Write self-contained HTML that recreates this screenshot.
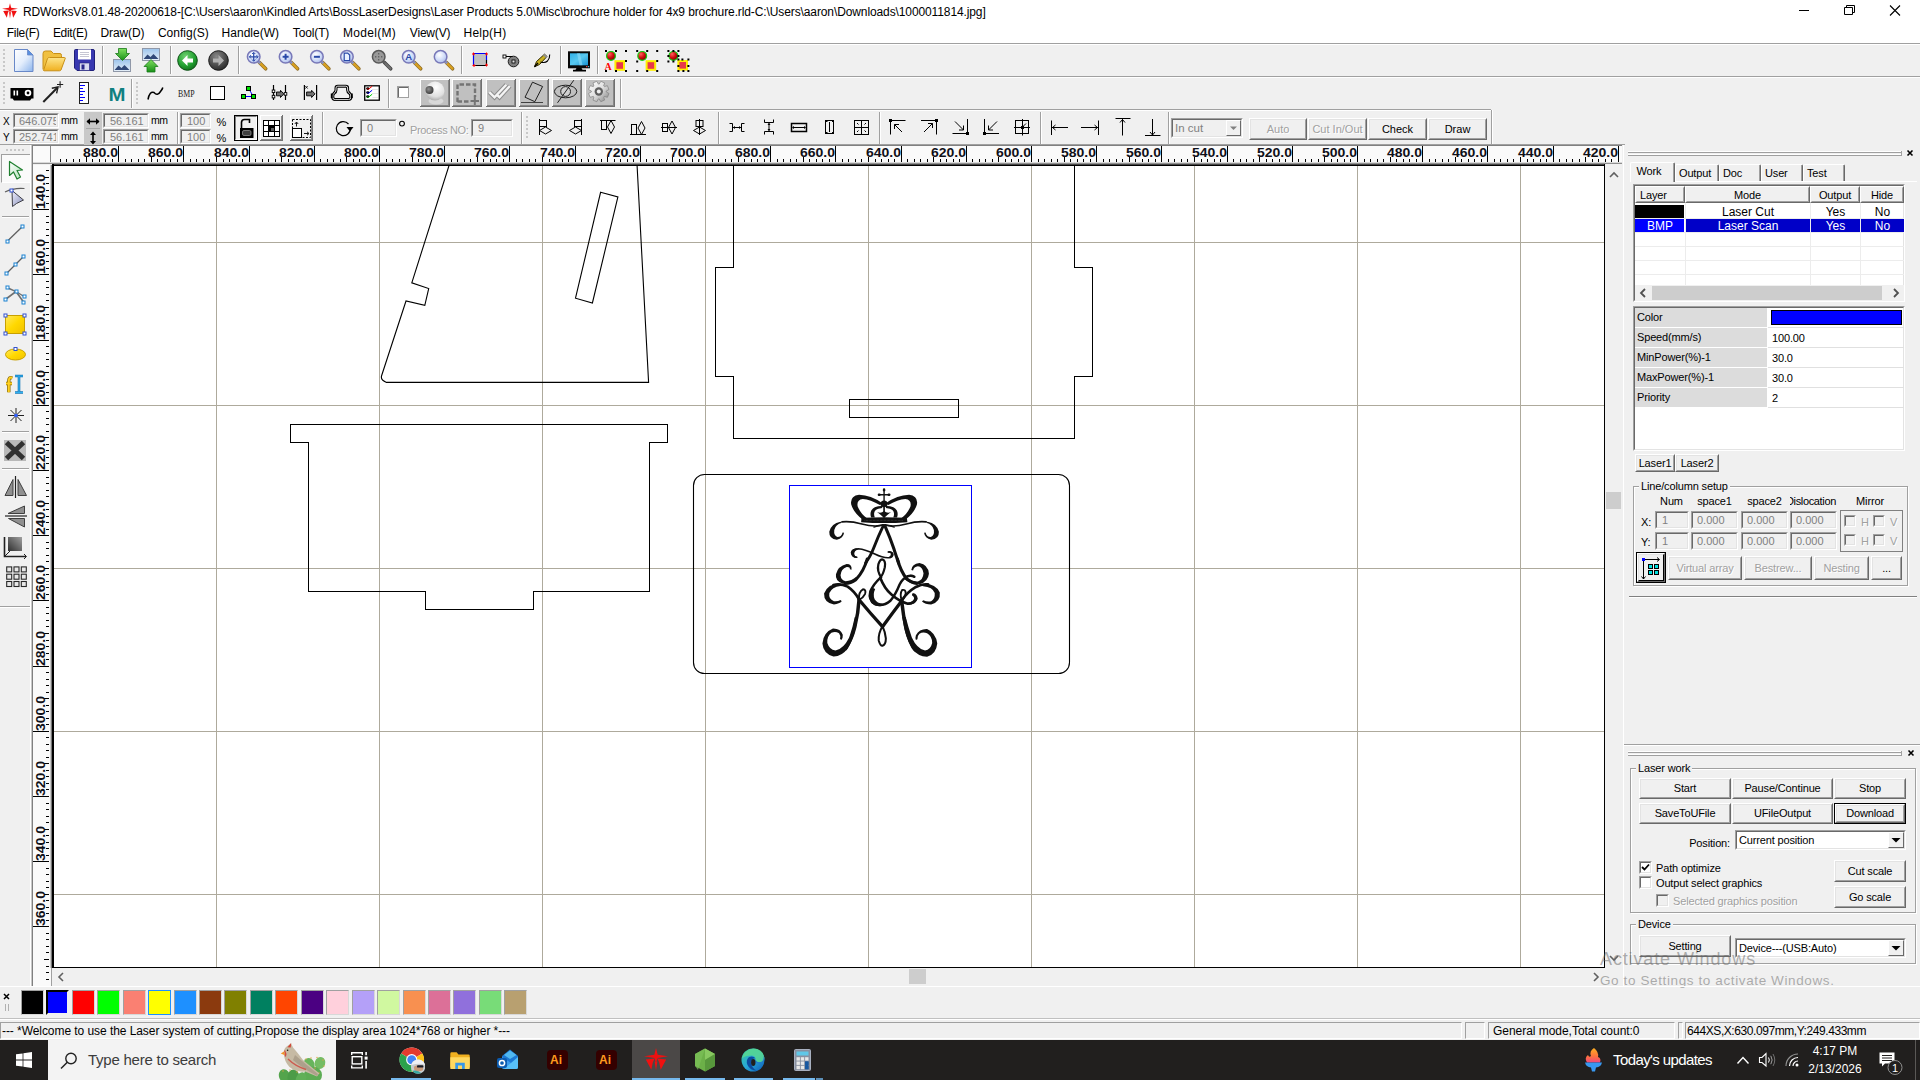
<!DOCTYPE html>
<html><head><meta charset="utf-8"><title>RDWorks</title><style>
html,body{margin:0;padding:0;}
body{width:1920px;height:1080px;overflow:hidden;background:#f0f0f0;font-family:"Liberation Sans",sans-serif;font-size:11px;color:#000;position:relative;}
div{box-sizing:border-box;}
</style></head><body>
<div style="position:absolute;left:51px;top:145px;width:1571px;height:18px;background:#fafafa;"></div><svg style="position:absolute;left:51px;top:145px;" width="1571" height="18" viewBox="0 0 1571 18"><rect x="9.0" y="14" width="1" height="3" fill="#000"/><rect x="15.0" y="14" width="1" height="3" fill="#000"/><rect x="22.0" y="14" width="1" height="3" fill="#000"/><rect x="28.0" y="14" width="1" height="3" fill="#000"/><rect x="35.0" y="12" width="1" height="5" fill="#000"/><rect x="41.0" y="14" width="1" height="3" fill="#000"/><rect x="48.0" y="14" width="1" height="3" fill="#000"/><rect x="54.0" y="14" width="1" height="3" fill="#000"/><rect x="61.0" y="14" width="1" height="3" fill="#000"/><rect x="67.0" y="1" width="1" height="16" fill="#000"/><rect x="74.0" y="14" width="1" height="3" fill="#000"/><rect x="80.0" y="14" width="1" height="3" fill="#000"/><rect x="87.0" y="14" width="1" height="3" fill="#000"/><rect x="93.0" y="14" width="1" height="3" fill="#000"/><rect x="100.0" y="12" width="1" height="5" fill="#000"/><rect x="106.0" y="14" width="1" height="3" fill="#000"/><rect x="113.0" y="14" width="1" height="3" fill="#000"/><rect x="119.0" y="14" width="1" height="3" fill="#000"/><rect x="126.0" y="14" width="1" height="3" fill="#000"/><rect x="132.0" y="1" width="1" height="16" fill="#000"/><rect x="139.0" y="14" width="1" height="3" fill="#000"/><rect x="145.0" y="14" width="1" height="3" fill="#000"/><rect x="152.0" y="14" width="1" height="3" fill="#000"/><rect x="158.0" y="14" width="1" height="3" fill="#000"/><rect x="165.0" y="12" width="1" height="5" fill="#000"/><rect x="172.0" y="14" width="1" height="3" fill="#000"/><rect x="178.0" y="14" width="1" height="3" fill="#000"/><rect x="185.0" y="14" width="1" height="3" fill="#000"/><rect x="191.0" y="14" width="1" height="3" fill="#000"/><rect x="198.0" y="1" width="1" height="16" fill="#000"/><rect x="204.0" y="14" width="1" height="3" fill="#000"/><rect x="211.0" y="14" width="1" height="3" fill="#000"/><rect x="217.0" y="14" width="1" height="3" fill="#000"/><rect x="224.0" y="14" width="1" height="3" fill="#000"/><rect x="230.0" y="12" width="1" height="5" fill="#000"/><rect x="237.0" y="14" width="1" height="3" fill="#000"/><rect x="243.0" y="14" width="1" height="3" fill="#000"/><rect x="250.0" y="14" width="1" height="3" fill="#000"/><rect x="256.0" y="14" width="1" height="3" fill="#000"/><rect x="263.0" y="1" width="1" height="16" fill="#000"/><rect x="269.0" y="14" width="1" height="3" fill="#000"/><rect x="276.0" y="14" width="1" height="3" fill="#000"/><rect x="282.0" y="14" width="1" height="3" fill="#000"/><rect x="289.0" y="14" width="1" height="3" fill="#000"/><rect x="295.0" y="12" width="1" height="5" fill="#000"/><rect x="302.0" y="14" width="1" height="3" fill="#000"/><rect x="308.0" y="14" width="1" height="3" fill="#000"/><rect x="315.0" y="14" width="1" height="3" fill="#000"/><rect x="321.0" y="14" width="1" height="3" fill="#000"/><rect x="328.0" y="1" width="1" height="16" fill="#000"/><rect x="335.0" y="14" width="1" height="3" fill="#000"/><rect x="341.0" y="14" width="1" height="3" fill="#000"/><rect x="348.0" y="14" width="1" height="3" fill="#000"/><rect x="354.0" y="14" width="1" height="3" fill="#000"/><rect x="361.0" y="12" width="1" height="5" fill="#000"/><rect x="367.0" y="14" width="1" height="3" fill="#000"/><rect x="374.0" y="14" width="1" height="3" fill="#000"/><rect x="380.0" y="14" width="1" height="3" fill="#000"/><rect x="387.0" y="14" width="1" height="3" fill="#000"/><rect x="393.0" y="1" width="1" height="16" fill="#000"/><rect x="400.0" y="14" width="1" height="3" fill="#000"/><rect x="406.0" y="14" width="1" height="3" fill="#000"/><rect x="413.0" y="14" width="1" height="3" fill="#000"/><rect x="419.0" y="14" width="1" height="3" fill="#000"/><rect x="426.0" y="12" width="1" height="5" fill="#000"/><rect x="432.0" y="14" width="1" height="3" fill="#000"/><rect x="439.0" y="14" width="1" height="3" fill="#000"/><rect x="445.0" y="14" width="1" height="3" fill="#000"/><rect x="452.0" y="14" width="1" height="3" fill="#000"/><rect x="458.0" y="1" width="1" height="16" fill="#000"/><rect x="465.0" y="14" width="1" height="3" fill="#000"/><rect x="471.0" y="14" width="1" height="3" fill="#000"/><rect x="478.0" y="14" width="1" height="3" fill="#000"/><rect x="484.0" y="14" width="1" height="3" fill="#000"/><rect x="491.0" y="12" width="1" height="5" fill="#000"/><rect x="498.0" y="14" width="1" height="3" fill="#000"/><rect x="504.0" y="14" width="1" height="3" fill="#000"/><rect x="511.0" y="14" width="1" height="3" fill="#000"/><rect x="517.0" y="14" width="1" height="3" fill="#000"/><rect x="524.0" y="1" width="1" height="16" fill="#000"/><rect x="530.0" y="14" width="1" height="3" fill="#000"/><rect x="537.0" y="14" width="1" height="3" fill="#000"/><rect x="543.0" y="14" width="1" height="3" fill="#000"/><rect x="550.0" y="14" width="1" height="3" fill="#000"/><rect x="556.0" y="12" width="1" height="5" fill="#000"/><rect x="563.0" y="14" width="1" height="3" fill="#000"/><rect x="569.0" y="14" width="1" height="3" fill="#000"/><rect x="576.0" y="14" width="1" height="3" fill="#000"/><rect x="582.0" y="14" width="1" height="3" fill="#000"/><rect x="589.0" y="1" width="1" height="16" fill="#000"/><rect x="595.0" y="14" width="1" height="3" fill="#000"/><rect x="602.0" y="14" width="1" height="3" fill="#000"/><rect x="608.0" y="14" width="1" height="3" fill="#000"/><rect x="615.0" y="14" width="1" height="3" fill="#000"/><rect x="621.0" y="12" width="1" height="5" fill="#000"/><rect x="628.0" y="14" width="1" height="3" fill="#000"/><rect x="634.0" y="14" width="1" height="3" fill="#000"/><rect x="641.0" y="14" width="1" height="3" fill="#000"/><rect x="647.0" y="14" width="1" height="3" fill="#000"/><rect x="654.0" y="1" width="1" height="16" fill="#000"/><rect x="661.0" y="14" width="1" height="3" fill="#000"/><rect x="667.0" y="14" width="1" height="3" fill="#000"/><rect x="674.0" y="14" width="1" height="3" fill="#000"/><rect x="680.0" y="14" width="1" height="3" fill="#000"/><rect x="687.0" y="12" width="1" height="5" fill="#000"/><rect x="693.0" y="14" width="1" height="3" fill="#000"/><rect x="700.0" y="14" width="1" height="3" fill="#000"/><rect x="706.0" y="14" width="1" height="3" fill="#000"/><rect x="713.0" y="14" width="1" height="3" fill="#000"/><rect x="719.0" y="1" width="1" height="16" fill="#000"/><rect x="726.0" y="14" width="1" height="3" fill="#000"/><rect x="732.0" y="14" width="1" height="3" fill="#000"/><rect x="739.0" y="14" width="1" height="3" fill="#000"/><rect x="745.0" y="14" width="1" height="3" fill="#000"/><rect x="752.0" y="12" width="1" height="5" fill="#000"/><rect x="758.0" y="14" width="1" height="3" fill="#000"/><rect x="765.0" y="14" width="1" height="3" fill="#000"/><rect x="771.0" y="14" width="1" height="3" fill="#000"/><rect x="778.0" y="14" width="1" height="3" fill="#000"/><rect x="784.0" y="1" width="1" height="16" fill="#000"/><rect x="791.0" y="14" width="1" height="3" fill="#000"/><rect x="797.0" y="14" width="1" height="3" fill="#000"/><rect x="804.0" y="14" width="1" height="3" fill="#000"/><rect x="810.0" y="14" width="1" height="3" fill="#000"/><rect x="817.0" y="12" width="1" height="5" fill="#000"/><rect x="824.0" y="14" width="1" height="3" fill="#000"/><rect x="830.0" y="14" width="1" height="3" fill="#000"/><rect x="837.0" y="14" width="1" height="3" fill="#000"/><rect x="843.0" y="14" width="1" height="3" fill="#000"/><rect x="850.0" y="1" width="1" height="16" fill="#000"/><rect x="856.0" y="14" width="1" height="3" fill="#000"/><rect x="863.0" y="14" width="1" height="3" fill="#000"/><rect x="869.0" y="14" width="1" height="3" fill="#000"/><rect x="876.0" y="14" width="1" height="3" fill="#000"/><rect x="882.0" y="12" width="1" height="5" fill="#000"/><rect x="889.0" y="14" width="1" height="3" fill="#000"/><rect x="895.0" y="14" width="1" height="3" fill="#000"/><rect x="902.0" y="14" width="1" height="3" fill="#000"/><rect x="908.0" y="14" width="1" height="3" fill="#000"/><rect x="915.0" y="1" width="1" height="16" fill="#000"/><rect x="921.0" y="14" width="1" height="3" fill="#000"/><rect x="928.0" y="14" width="1" height="3" fill="#000"/><rect x="934.0" y="14" width="1" height="3" fill="#000"/><rect x="941.0" y="14" width="1" height="3" fill="#000"/><rect x="947.0" y="12" width="1" height="5" fill="#000"/><rect x="954.0" y="14" width="1" height="3" fill="#000"/><rect x="960.0" y="14" width="1" height="3" fill="#000"/><rect x="967.0" y="14" width="1" height="3" fill="#000"/><rect x="973.0" y="14" width="1" height="3" fill="#000"/><rect x="980.0" y="1" width="1" height="16" fill="#000"/><rect x="987.0" y="14" width="1" height="3" fill="#000"/><rect x="993.0" y="14" width="1" height="3" fill="#000"/><rect x="1000.0" y="14" width="1" height="3" fill="#000"/><rect x="1006.0" y="14" width="1" height="3" fill="#000"/><rect x="1013.0" y="12" width="1" height="5" fill="#000"/><rect x="1019.0" y="14" width="1" height="3" fill="#000"/><rect x="1026.0" y="14" width="1" height="3" fill="#000"/><rect x="1032.0" y="14" width="1" height="3" fill="#000"/><rect x="1039.0" y="14" width="1" height="3" fill="#000"/><rect x="1045.0" y="1" width="1" height="16" fill="#000"/><rect x="1052.0" y="14" width="1" height="3" fill="#000"/><rect x="1058.0" y="14" width="1" height="3" fill="#000"/><rect x="1065.0" y="14" width="1" height="3" fill="#000"/><rect x="1071.0" y="14" width="1" height="3" fill="#000"/><rect x="1078.0" y="12" width="1" height="5" fill="#000"/><rect x="1084.0" y="14" width="1" height="3" fill="#000"/><rect x="1091.0" y="14" width="1" height="3" fill="#000"/><rect x="1097.0" y="14" width="1" height="3" fill="#000"/><rect x="1104.0" y="14" width="1" height="3" fill="#000"/><rect x="1110.0" y="1" width="1" height="16" fill="#000"/><rect x="1117.0" y="14" width="1" height="3" fill="#000"/><rect x="1123.0" y="14" width="1" height="3" fill="#000"/><rect x="1130.0" y="14" width="1" height="3" fill="#000"/><rect x="1136.0" y="14" width="1" height="3" fill="#000"/><rect x="1143.0" y="12" width="1" height="5" fill="#000"/><rect x="1150.0" y="14" width="1" height="3" fill="#000"/><rect x="1156.0" y="14" width="1" height="3" fill="#000"/><rect x="1163.0" y="14" width="1" height="3" fill="#000"/><rect x="1169.0" y="14" width="1" height="3" fill="#000"/><rect x="1176.0" y="1" width="1" height="16" fill="#000"/><rect x="1182.0" y="14" width="1" height="3" fill="#000"/><rect x="1189.0" y="14" width="1" height="3" fill="#000"/><rect x="1195.0" y="14" width="1" height="3" fill="#000"/><rect x="1202.0" y="14" width="1" height="3" fill="#000"/><rect x="1208.0" y="12" width="1" height="5" fill="#000"/><rect x="1215.0" y="14" width="1" height="3" fill="#000"/><rect x="1221.0" y="14" width="1" height="3" fill="#000"/><rect x="1228.0" y="14" width="1" height="3" fill="#000"/><rect x="1234.0" y="14" width="1" height="3" fill="#000"/><rect x="1241.0" y="1" width="1" height="16" fill="#000"/><rect x="1247.0" y="14" width="1" height="3" fill="#000"/><rect x="1254.0" y="14" width="1" height="3" fill="#000"/><rect x="1260.0" y="14" width="1" height="3" fill="#000"/><rect x="1267.0" y="14" width="1" height="3" fill="#000"/><rect x="1273.0" y="12" width="1" height="5" fill="#000"/><rect x="1280.0" y="14" width="1" height="3" fill="#000"/><rect x="1286.0" y="14" width="1" height="3" fill="#000"/><rect x="1293.0" y="14" width="1" height="3" fill="#000"/><rect x="1299.0" y="14" width="1" height="3" fill="#000"/><rect x="1306.0" y="1" width="1" height="16" fill="#000"/><rect x="1313.0" y="14" width="1" height="3" fill="#000"/><rect x="1319.0" y="14" width="1" height="3" fill="#000"/><rect x="1326.0" y="14" width="1" height="3" fill="#000"/><rect x="1332.0" y="14" width="1" height="3" fill="#000"/><rect x="1339.0" y="12" width="1" height="5" fill="#000"/><rect x="1345.0" y="14" width="1" height="3" fill="#000"/><rect x="1352.0" y="14" width="1" height="3" fill="#000"/><rect x="1358.0" y="14" width="1" height="3" fill="#000"/><rect x="1365.0" y="14" width="1" height="3" fill="#000"/><rect x="1371.0" y="1" width="1" height="16" fill="#000"/><rect x="1378.0" y="14" width="1" height="3" fill="#000"/><rect x="1384.0" y="14" width="1" height="3" fill="#000"/><rect x="1391.0" y="14" width="1" height="3" fill="#000"/><rect x="1397.0" y="14" width="1" height="3" fill="#000"/><rect x="1404.0" y="12" width="1" height="5" fill="#000"/><rect x="1410.0" y="14" width="1" height="3" fill="#000"/><rect x="1417.0" y="14" width="1" height="3" fill="#000"/><rect x="1423.0" y="14" width="1" height="3" fill="#000"/><rect x="1430.0" y="14" width="1" height="3" fill="#000"/><rect x="1436.0" y="1" width="1" height="16" fill="#000"/><rect x="1443.0" y="14" width="1" height="3" fill="#000"/><rect x="1449.0" y="14" width="1" height="3" fill="#000"/><rect x="1456.0" y="14" width="1" height="3" fill="#000"/><rect x="1462.0" y="14" width="1" height="3" fill="#000"/><rect x="1469.0" y="12" width="1" height="5" fill="#000"/><rect x="1476.0" y="14" width="1" height="3" fill="#000"/><rect x="1482.0" y="14" width="1" height="3" fill="#000"/><rect x="1489.0" y="14" width="1" height="3" fill="#000"/><rect x="1495.0" y="14" width="1" height="3" fill="#000"/><rect x="1502.0" y="1" width="1" height="16" fill="#000"/><rect x="1508.0" y="14" width="1" height="3" fill="#000"/><rect x="1515.0" y="14" width="1" height="3" fill="#000"/><rect x="1521.0" y="14" width="1" height="3" fill="#000"/><rect x="1528.0" y="14" width="1" height="3" fill="#000"/><rect x="1534.0" y="12" width="1" height="5" fill="#000"/><rect x="1541.0" y="14" width="1" height="3" fill="#000"/><rect x="1547.0" y="14" width="1" height="3" fill="#000"/><rect x="1554.0" y="14" width="1" height="3" fill="#000"/><rect x="1560.0" y="14" width="1" height="3" fill="#000"/><rect x="1567.0" y="1" width="1" height="16" fill="#000"/><text x="67.0" y="11.6" text-anchor="end" font-family="Liberation Sans" font-weight="bold" font-size="13" textLength="35" lengthAdjust="spacingAndGlyphs" fill="#101018">880.0</text><text x="132.0" y="11.6" text-anchor="end" font-family="Liberation Sans" font-weight="bold" font-size="13" textLength="35" lengthAdjust="spacingAndGlyphs" fill="#101018">860.0</text><text x="198.0" y="11.6" text-anchor="end" font-family="Liberation Sans" font-weight="bold" font-size="13" textLength="35" lengthAdjust="spacingAndGlyphs" fill="#101018">840.0</text><text x="263.0" y="11.6" text-anchor="end" font-family="Liberation Sans" font-weight="bold" font-size="13" textLength="35" lengthAdjust="spacingAndGlyphs" fill="#101018">820.0</text><text x="328.0" y="11.6" text-anchor="end" font-family="Liberation Sans" font-weight="bold" font-size="13" textLength="35" lengthAdjust="spacingAndGlyphs" fill="#101018">800.0</text><text x="393.0" y="11.6" text-anchor="end" font-family="Liberation Sans" font-weight="bold" font-size="13" textLength="35" lengthAdjust="spacingAndGlyphs" fill="#101018">780.0</text><text x="458.0" y="11.6" text-anchor="end" font-family="Liberation Sans" font-weight="bold" font-size="13" textLength="35" lengthAdjust="spacingAndGlyphs" fill="#101018">760.0</text><text x="524.0" y="11.6" text-anchor="end" font-family="Liberation Sans" font-weight="bold" font-size="13" textLength="35" lengthAdjust="spacingAndGlyphs" fill="#101018">740.0</text><text x="589.0" y="11.6" text-anchor="end" font-family="Liberation Sans" font-weight="bold" font-size="13" textLength="35" lengthAdjust="spacingAndGlyphs" fill="#101018">720.0</text><text x="654.0" y="11.6" text-anchor="end" font-family="Liberation Sans" font-weight="bold" font-size="13" textLength="35" lengthAdjust="spacingAndGlyphs" fill="#101018">700.0</text><text x="719.0" y="11.6" text-anchor="end" font-family="Liberation Sans" font-weight="bold" font-size="13" textLength="35" lengthAdjust="spacingAndGlyphs" fill="#101018">680.0</text><text x="784.0" y="11.6" text-anchor="end" font-family="Liberation Sans" font-weight="bold" font-size="13" textLength="35" lengthAdjust="spacingAndGlyphs" fill="#101018">660.0</text><text x="850.0" y="11.6" text-anchor="end" font-family="Liberation Sans" font-weight="bold" font-size="13" textLength="35" lengthAdjust="spacingAndGlyphs" fill="#101018">640.0</text><text x="915.0" y="11.6" text-anchor="end" font-family="Liberation Sans" font-weight="bold" font-size="13" textLength="35" lengthAdjust="spacingAndGlyphs" fill="#101018">620.0</text><text x="980.0" y="11.6" text-anchor="end" font-family="Liberation Sans" font-weight="bold" font-size="13" textLength="35" lengthAdjust="spacingAndGlyphs" fill="#101018">600.0</text><text x="1045.0" y="11.6" text-anchor="end" font-family="Liberation Sans" font-weight="bold" font-size="13" textLength="35" lengthAdjust="spacingAndGlyphs" fill="#101018">580.0</text><text x="1110.0" y="11.6" text-anchor="end" font-family="Liberation Sans" font-weight="bold" font-size="13" textLength="35" lengthAdjust="spacingAndGlyphs" fill="#101018">560.0</text><text x="1176.0" y="11.6" text-anchor="end" font-family="Liberation Sans" font-weight="bold" font-size="13" textLength="35" lengthAdjust="spacingAndGlyphs" fill="#101018">540.0</text><text x="1241.0" y="11.6" text-anchor="end" font-family="Liberation Sans" font-weight="bold" font-size="13" textLength="35" lengthAdjust="spacingAndGlyphs" fill="#101018">520.0</text><text x="1306.0" y="11.6" text-anchor="end" font-family="Liberation Sans" font-weight="bold" font-size="13" textLength="35" lengthAdjust="spacingAndGlyphs" fill="#101018">500.0</text><text x="1371.0" y="11.6" text-anchor="end" font-family="Liberation Sans" font-weight="bold" font-size="13" textLength="35" lengthAdjust="spacingAndGlyphs" fill="#101018">480.0</text><text x="1436.0" y="11.6" text-anchor="end" font-family="Liberation Sans" font-weight="bold" font-size="13" textLength="35" lengthAdjust="spacingAndGlyphs" fill="#101018">460.0</text><text x="1502.0" y="11.6" text-anchor="end" font-family="Liberation Sans" font-weight="bold" font-size="13" textLength="35" lengthAdjust="spacingAndGlyphs" fill="#101018">440.0</text><text x="1567.0" y="11.6" text-anchor="end" font-family="Liberation Sans" font-weight="bold" font-size="13" textLength="35" lengthAdjust="spacingAndGlyphs" fill="#101018">420.0</text></svg><div style="position:absolute;left:33px;top:145px;width:18px;height:18px;background:#fafafa;box-sizing:border-box;border-right:1px solid #888;border-bottom:1px solid #888;"></div><div style="position:absolute;left:33px;top:163px;width:1589px;height:1px;background:#909090;"></div><div style="position:absolute;left:33px;top:162px;width:1589px;height:1px;background:#d8d8d8;"></div><div style="position:absolute;left:33px;top:145px;width:1589px;height:1px;background:#808080;"></div><div style="position:absolute;left:51px;top:968px;width:1px;height:18px;background:#a0a0a0;"></div><div style="position:absolute;left:33px;top:165px;width:18px;height:822px;background:#fafafa;"></div><svg style="position:absolute;left:33px;top:165px;" width="18" height="822" viewBox="0 0 18 822"><rect x="13" y="5.0" width="3" height="1" fill="#000"/><rect x="11" y="12.0" width="5" height="1" fill="#000"/><rect x="13" y="18.0" width="3" height="1" fill="#000"/><rect x="13" y="25.0" width="3" height="1" fill="#000"/><rect x="13" y="31.0" width="3" height="1" fill="#000"/><rect x="13" y="38.0" width="3" height="1" fill="#000"/><rect x="0" y="44.0" width="16" height="1" fill="#000"/><rect x="13" y="51.0" width="3" height="1" fill="#000"/><rect x="13" y="57.0" width="3" height="1" fill="#000"/><rect x="13" y="64.0" width="3" height="1" fill="#000"/><rect x="13" y="70.0" width="3" height="1" fill="#000"/><rect x="11" y="77.0" width="5" height="1" fill="#000"/><rect x="13" y="83.0" width="3" height="1" fill="#000"/><rect x="13" y="90.0" width="3" height="1" fill="#000"/><rect x="13" y="96.0" width="3" height="1" fill="#000"/><rect x="13" y="103.0" width="3" height="1" fill="#000"/><rect x="0" y="109.0" width="16" height="1" fill="#000"/><rect x="13" y="116.0" width="3" height="1" fill="#000"/><rect x="13" y="122.0" width="3" height="1" fill="#000"/><rect x="13" y="129.0" width="3" height="1" fill="#000"/><rect x="13" y="135.0" width="3" height="1" fill="#000"/><rect x="11" y="142.0" width="5" height="1" fill="#000"/><rect x="13" y="149.0" width="3" height="1" fill="#000"/><rect x="13" y="155.0" width="3" height="1" fill="#000"/><rect x="13" y="162.0" width="3" height="1" fill="#000"/><rect x="13" y="168.0" width="3" height="1" fill="#000"/><rect x="0" y="175.0" width="16" height="1" fill="#000"/><rect x="13" y="181.0" width="3" height="1" fill="#000"/><rect x="13" y="188.0" width="3" height="1" fill="#000"/><rect x="13" y="194.0" width="3" height="1" fill="#000"/><rect x="13" y="201.0" width="3" height="1" fill="#000"/><rect x="11" y="207.0" width="5" height="1" fill="#000"/><rect x="13" y="214.0" width="3" height="1" fill="#000"/><rect x="13" y="220.0" width="3" height="1" fill="#000"/><rect x="13" y="227.0" width="3" height="1" fill="#000"/><rect x="13" y="233.0" width="3" height="1" fill="#000"/><rect x="0" y="240.0" width="16" height="1" fill="#000"/><rect x="13" y="246.0" width="3" height="1" fill="#000"/><rect x="13" y="253.0" width="3" height="1" fill="#000"/><rect x="13" y="259.0" width="3" height="1" fill="#000"/><rect x="13" y="266.0" width="3" height="1" fill="#000"/><rect x="11" y="272.0" width="5" height="1" fill="#000"/><rect x="13" y="279.0" width="3" height="1" fill="#000"/><rect x="13" y="285.0" width="3" height="1" fill="#000"/><rect x="13" y="292.0" width="3" height="1" fill="#000"/><rect x="13" y="298.0" width="3" height="1" fill="#000"/><rect x="0" y="305.0" width="16" height="1" fill="#000"/><rect x="13" y="312.0" width="3" height="1" fill="#000"/><rect x="13" y="318.0" width="3" height="1" fill="#000"/><rect x="13" y="325.0" width="3" height="1" fill="#000"/><rect x="13" y="331.0" width="3" height="1" fill="#000"/><rect x="11" y="338.0" width="5" height="1" fill="#000"/><rect x="13" y="344.0" width="3" height="1" fill="#000"/><rect x="13" y="351.0" width="3" height="1" fill="#000"/><rect x="13" y="357.0" width="3" height="1" fill="#000"/><rect x="13" y="364.0" width="3" height="1" fill="#000"/><rect x="0" y="370.0" width="16" height="1" fill="#000"/><rect x="13" y="377.0" width="3" height="1" fill="#000"/><rect x="13" y="383.0" width="3" height="1" fill="#000"/><rect x="13" y="390.0" width="3" height="1" fill="#000"/><rect x="13" y="396.0" width="3" height="1" fill="#000"/><rect x="11" y="403.0" width="5" height="1" fill="#000"/><rect x="13" y="409.0" width="3" height="1" fill="#000"/><rect x="13" y="416.0" width="3" height="1" fill="#000"/><rect x="13" y="422.0" width="3" height="1" fill="#000"/><rect x="13" y="429.0" width="3" height="1" fill="#000"/><rect x="0" y="435.0" width="16" height="1" fill="#000"/><rect x="13" y="442.0" width="3" height="1" fill="#000"/><rect x="13" y="448.0" width="3" height="1" fill="#000"/><rect x="13" y="455.0" width="3" height="1" fill="#000"/><rect x="13" y="461.0" width="3" height="1" fill="#000"/><rect x="11" y="468.0" width="5" height="1" fill="#000"/><rect x="13" y="475.0" width="3" height="1" fill="#000"/><rect x="13" y="481.0" width="3" height="1" fill="#000"/><rect x="13" y="488.0" width="3" height="1" fill="#000"/><rect x="13" y="494.0" width="3" height="1" fill="#000"/><rect x="0" y="501.0" width="16" height="1" fill="#000"/><rect x="13" y="507.0" width="3" height="1" fill="#000"/><rect x="13" y="514.0" width="3" height="1" fill="#000"/><rect x="13" y="520.0" width="3" height="1" fill="#000"/><rect x="13" y="527.0" width="3" height="1" fill="#000"/><rect x="11" y="533.0" width="5" height="1" fill="#000"/><rect x="13" y="540.0" width="3" height="1" fill="#000"/><rect x="13" y="546.0" width="3" height="1" fill="#000"/><rect x="13" y="553.0" width="3" height="1" fill="#000"/><rect x="13" y="559.0" width="3" height="1" fill="#000"/><rect x="0" y="566.0" width="16" height="1" fill="#000"/><rect x="13" y="572.0" width="3" height="1" fill="#000"/><rect x="13" y="579.0" width="3" height="1" fill="#000"/><rect x="13" y="585.0" width="3" height="1" fill="#000"/><rect x="13" y="592.0" width="3" height="1" fill="#000"/><rect x="11" y="598.0" width="5" height="1" fill="#000"/><rect x="13" y="605.0" width="3" height="1" fill="#000"/><rect x="13" y="611.0" width="3" height="1" fill="#000"/><rect x="13" y="618.0" width="3" height="1" fill="#000"/><rect x="13" y="624.0" width="3" height="1" fill="#000"/><rect x="0" y="631.0" width="16" height="1" fill="#000"/><rect x="13" y="638.0" width="3" height="1" fill="#000"/><rect x="13" y="644.0" width="3" height="1" fill="#000"/><rect x="13" y="651.0" width="3" height="1" fill="#000"/><rect x="13" y="657.0" width="3" height="1" fill="#000"/><rect x="11" y="664.0" width="5" height="1" fill="#000"/><rect x="13" y="670.0" width="3" height="1" fill="#000"/><rect x="13" y="677.0" width="3" height="1" fill="#000"/><rect x="13" y="683.0" width="3" height="1" fill="#000"/><rect x="13" y="690.0" width="3" height="1" fill="#000"/><rect x="0" y="696.0" width="16" height="1" fill="#000"/><rect x="13" y="703.0" width="3" height="1" fill="#000"/><rect x="13" y="709.0" width="3" height="1" fill="#000"/><rect x="13" y="716.0" width="3" height="1" fill="#000"/><rect x="13" y="722.0" width="3" height="1" fill="#000"/><rect x="11" y="729.0" width="5" height="1" fill="#000"/><rect x="13" y="735.0" width="3" height="1" fill="#000"/><rect x="13" y="742.0" width="3" height="1" fill="#000"/><rect x="13" y="748.0" width="3" height="1" fill="#000"/><rect x="13" y="755.0" width="3" height="1" fill="#000"/><rect x="0" y="761.0" width="16" height="1" fill="#000"/><rect x="13" y="768.0" width="3" height="1" fill="#000"/><rect x="13" y="774.0" width="3" height="1" fill="#000"/><rect x="13" y="781.0" width="3" height="1" fill="#000"/><rect x="13" y="787.0" width="3" height="1" fill="#000"/><rect x="11" y="794.0" width="5" height="1" fill="#000"/><rect x="13" y="801.0" width="3" height="1" fill="#000"/><rect x="13" y="807.0" width="3" height="1" fill="#000"/><rect x="13" y="814.0" width="3" height="1" fill="#000"/><text transform="translate(11.6,44.0) rotate(-90)" x="0" y="0" text-anchor="start" font-family="Liberation Sans" font-weight="bold" font-size="13" textLength="35" lengthAdjust="spacingAndGlyphs" fill="#101018">140.0</text><text transform="translate(11.6,109.0) rotate(-90)" x="0" y="0" text-anchor="start" font-family="Liberation Sans" font-weight="bold" font-size="13" textLength="35" lengthAdjust="spacingAndGlyphs" fill="#101018">160.0</text><text transform="translate(11.6,175.0) rotate(-90)" x="0" y="0" text-anchor="start" font-family="Liberation Sans" font-weight="bold" font-size="13" textLength="35" lengthAdjust="spacingAndGlyphs" fill="#101018">180.0</text><text transform="translate(11.6,240.0) rotate(-90)" x="0" y="0" text-anchor="start" font-family="Liberation Sans" font-weight="bold" font-size="13" textLength="35" lengthAdjust="spacingAndGlyphs" fill="#101018">200.0</text><text transform="translate(11.6,305.0) rotate(-90)" x="0" y="0" text-anchor="start" font-family="Liberation Sans" font-weight="bold" font-size="13" textLength="35" lengthAdjust="spacingAndGlyphs" fill="#101018">220.0</text><text transform="translate(11.6,370.0) rotate(-90)" x="0" y="0" text-anchor="start" font-family="Liberation Sans" font-weight="bold" font-size="13" textLength="35" lengthAdjust="spacingAndGlyphs" fill="#101018">240.0</text><text transform="translate(11.6,435.0) rotate(-90)" x="0" y="0" text-anchor="start" font-family="Liberation Sans" font-weight="bold" font-size="13" textLength="35" lengthAdjust="spacingAndGlyphs" fill="#101018">260.0</text><text transform="translate(11.6,501.0) rotate(-90)" x="0" y="0" text-anchor="start" font-family="Liberation Sans" font-weight="bold" font-size="13" textLength="35" lengthAdjust="spacingAndGlyphs" fill="#101018">280.0</text><text transform="translate(11.6,566.0) rotate(-90)" x="0" y="0" text-anchor="start" font-family="Liberation Sans" font-weight="bold" font-size="13" textLength="35" lengthAdjust="spacingAndGlyphs" fill="#101018">300.0</text><text transform="translate(11.6,631.0) rotate(-90)" x="0" y="0" text-anchor="start" font-family="Liberation Sans" font-weight="bold" font-size="13" textLength="35" lengthAdjust="spacingAndGlyphs" fill="#101018">320.0</text><text transform="translate(11.6,696.0) rotate(-90)" x="0" y="0" text-anchor="start" font-family="Liberation Sans" font-weight="bold" font-size="13" textLength="35" lengthAdjust="spacingAndGlyphs" fill="#101018">340.0</text><text transform="translate(11.6,761.0) rotate(-90)" x="0" y="0" text-anchor="start" font-family="Liberation Sans" font-weight="bold" font-size="13" textLength="35" lengthAdjust="spacingAndGlyphs" fill="#101018">360.0</text></svg><div style="position:absolute;left:32px;top:145px;width:1px;height:842px;background:#808080;"></div><div style="position:absolute;left:31px;top:145px;width:1px;height:842px;background:#c8c8c8;"></div><div style="position:absolute;left:50px;top:165px;width:1px;height:803px;background:#c8c8c8;"></div><div style="position:absolute;left:51px;top:165px;width:1px;height:803px;background:#787878;"></div><div style="position:absolute;left:52px;top:164px;width:1554px;height:804px;background:#fff;"></div><svg style="position:absolute;left:52px;top:164px;" width="1554" height="804" viewBox="0 0 1554 804"><rect x="164" y="0" width="1" height="804" fill="#aeaa9c"/><rect x="327" y="0" width="1" height="804" fill="#aeaa9c"/><rect x="490" y="0" width="1" height="804" fill="#aeaa9c"/><rect x="653" y="0" width="1" height="804" fill="#aeaa9c"/><rect x="816" y="0" width="1" height="804" fill="#aeaa9c"/><rect x="979" y="0" width="1" height="804" fill="#aeaa9c"/><rect x="1142" y="0" width="1" height="804" fill="#aeaa9c"/><rect x="1305" y="0" width="1" height="804" fill="#aeaa9c"/><rect x="1468" y="0" width="1" height="804" fill="#aeaa9c"/><rect x="0" y="78" width="1554" height="1" fill="#aeaa9c"/><rect x="0" y="241" width="1554" height="1" fill="#aeaa9c"/><rect x="0" y="404" width="1554" height="1" fill="#aeaa9c"/><rect x="0" y="567" width="1554" height="1" fill="#aeaa9c"/><rect x="0" y="730" width="1554" height="1" fill="#aeaa9c"/><path d="M397.5 0.0 L359.8 118.8 L376.7 124.5 L372.8 141.4 L354.0 137.0 L329.5 212.0 Q328.5 216.0 334.5 218.4 L596.6 218.4 L585.0 0.0" fill="none" stroke="#000" stroke-width="1.1"/><path d="M548.6 28.3 L565.9 33.0 L540.4 139.0 L523.5 134.2 Z" fill="none" stroke="#000" stroke-width="1.1"/><path d="M681.5 0.0 L681.5 103.5 L663.5 103.5 L663.5 212.5 L681.5 212.5 L681.5 274.5 L1022.5 274.5 L1022.5 212.5 L1040.5 212.5 L1040.5 103.5 L1022.5 103.5 L1022.5 0.0" fill="none" stroke="#000" stroke-width="1" shape-rendering="crispEdges"/><path d="M797.5 235.5 L906.5 235.5 L906.5 253.5 L797.5 253.5 Z" fill="none" stroke="#000" stroke-width="1" shape-rendering="crispEdges"/><path d="M238.5 260.5 L615.5 260.5 L615.5 278.5 L597.5 278.5 L597.5 427.5 L481.5 427.5 L481.5 445.5 L373.5 445.5 L373.5 427.5 L256.5 427.5 L256.5 278.5 L238.5 278.5 Z" fill="none" stroke="#000" stroke-width="1" shape-rendering="crispEdges"/><rect x="641.5" y="310.5" width="376.0" height="199.0" rx="11" ry="11" fill="none" stroke="#000" stroke-width="1.1"/><rect x="737.5" y="321.5" width="182.0" height="182.0" fill="#fff" stroke="#0000ff" stroke-width="1" shape-rendering="crispEdges"/><g transform="translate(758,316) scale(0.0925926)"><path d="M800 105 V235" fill="none" stroke="#111" stroke-width="15" stroke-linecap="round" stroke-linejoin="round" /><path d="M745 160 H857" fill="none" stroke="#111" stroke-width="15" stroke-linecap="round" stroke-linejoin="round" /><path d="M800 102 V110" fill="none" stroke="#111" stroke-width="26" stroke-linecap="round" stroke-linejoin="round" /><path d="M744 160 H750" fill="none" stroke="#111" stroke-width="26" stroke-linecap="round" stroke-linejoin="round" /><path d="M850 160 H856" fill="none" stroke="#111" stroke-width="26" stroke-linecap="round" stroke-linejoin="round" /><circle cx="800" cy="258" r="36" fill="#111"/><path d="M565 425 Q470 350 445 265 Q430 170 530 158 Q660 165 775 245 L760 272 Q650 210 570 205 Q500 215 515 285 Q550 370 615 412 Z" fill="#111"/><path d="M1035 425 Q1130 350 1155 265 Q1170 170 1070 158 Q940 165 825 245 L840 272 Q950 210 1030 205 Q1100 215 1085 285 Q1050 370 985 412 Z" fill="#111"/><path d="M660 405 Q635 330 700 295 Q740 280 780 282 L780 302 Q730 305 710 325 Q680 350 700 405 Z" fill="#111"/><path d="M940 405 Q965 330 900 295 Q860 280 820 282 L820 302 Q870 305 890 325 Q920 350 900 405 Z" fill="#111"/><path d="M800 290 V395" fill="none" stroke="#111" stroke-width="18" stroke-linecap="round" stroke-linejoin="round" /><path d="M725 345 Q765 365 800 335 Q835 365 875 345 Q830 380 800 410 Q770 380 725 345 Z" fill="#111"/><path d="M556 408 Q800 395 1046 408 L1052 455 Q800 475 552 455 Z" fill="#111"/><path d="M590 438 Q800 432 1010 438" stroke="#888" stroke-width="5" stroke-dasharray="6 9" fill="none"/><path d="M790 484 Q700 514 560 474 Q440 442 345 452" fill="none" stroke="#111" stroke-width="17" stroke-linecap="round" stroke-linejoin="round" /><path d="M330 452 Q230 470 208 560 Q205 640 290 645 Q360 630 368 570 L352 566 Q340 615 295 615 Q255 600 262 540 Q275 480 345 462 Z" fill="#111"/><path d="M810 484 Q900 514 1040 474 Q1160 442 1255 452" fill="none" stroke="#111" stroke-width="17" stroke-linecap="round" stroke-linejoin="round" /><path d="M1270 452 Q1370 470 1392 560 Q1395 640 1310 645 Q1240 630 1232 570 L1248 566 Q1260 615 1305 615 Q1345 600 1338 540 Q1325 480 1255 462 Z" fill="#111"/><path d="M690 508 Q800 468 910 508" fill="none" stroke="#111" stroke-width="14" stroke-linecap="round" stroke-linejoin="round" /><path d="M792 492 Q735 610 690 730 Q655 820 621 864 L600 900" fill="none" stroke="#111" stroke-width="31" stroke-linecap="round" stroke-linejoin="round" /><path d="M808 492 Q865 620 905 740 Q930 820 946 864 L958 900" fill="none" stroke="#111" stroke-width="33" stroke-linecap="round" stroke-linejoin="round" /><path d="M505 835 Q455 830 448 785 Q455 745 520 742 Q600 750 700 800 Q800 850 870 838 Q905 820 890 790 Q870 768 845 778" fill="none" stroke="#111" stroke-width="17" stroke-linecap="round" stroke-linejoin="round" /><path d="M445 790 Q440 750 500 738 L520 750 Q475 765 478 800 Q485 830 505 828 L505 842 Q450 840 445 790 Z" fill="#111"/><path d="M845 770 Q880 765 898 795 Q905 830 865 845 L855 830 Q880 815 872 795 Q865 782 845 785 Z" fill="#111"/></g><g transform="translate(758,396) scale(0.101818)"><path d="M562 -10 Q530 110 450 195 Q400 232 345 232" fill="none" stroke="#111" stroke-width="29" stroke-linecap="round" stroke-linejoin="round" /><path d="M470 185 Q400 250 320 232 Q245 205 255 140 Q275 60 360 40 Q415 40 408 95 L392 92 Q395 65 360 68 Q305 85 300 150 Q305 200 350 208 Q410 205 455 165 Z" fill="#111"/><path d="M858 -10 Q890 110 950 185 Q1000 225 1050 230" fill="none" stroke="#111" stroke-width="30" stroke-linecap="round" stroke-linejoin="round" /><path d="M945 170 Q1000 215 1060 210 Q1110 195 1115 130 Q1105 65 1060 62 Q1020 68 1012 102 L995 98 Q1000 40 1075 30 Q1160 45 1168 135 Q1160 215 1075 238 Q990 245 930 190 Z" fill="#111"/><path d="M1022 165 Q990 140 945 170" fill="none" stroke="#111" stroke-width="16" stroke-linecap="round" stroke-linejoin="round" /><path d="M700 170 Q655 110 672 40 Q690 -10 715 -5 Q745 10 735 70 Q720 140 690 175" fill="none" stroke="#111" stroke-width="22" stroke-linecap="round" stroke-linejoin="round" /><path d="M690 175 Q730 280 800 340 Q880 410 960 430 Q1030 425 1045 380 Q1040 345 1015 340" fill="none" stroke="#111" stroke-width="26" stroke-linecap="round" stroke-linejoin="round" /><path d="M1010 330 Q1055 345 1052 385 Q1035 440 960 442 L955 420 Q1010 415 1022 380 Q1025 355 1005 348 Z" fill="#111"/><path d="M690 175 Q620 240 592 310 Q570 390 640 435 Q720 460 790 400 Q840 340 880 240 Q910 180 960 158 Q1000 148 1025 165" fill="none" stroke="#111" stroke-width="24" stroke-linecap="round" stroke-linejoin="round" /><path d="M610 270 Q560 350 600 420 Q650 465 720 450 L715 430 Q660 425 635 385 Q615 340 640 285 Z" fill="#111"/><path d="M480 385 Q440 310 370 262 Q300 228 230 245" fill="none" stroke="#111" stroke-width="26" stroke-linecap="round" stroke-linejoin="round" /><path d="M300 232 Q180 225 138 330 Q135 420 235 438 Q290 430 312 405 L300 392 Q270 410 235 405 Q180 385 190 325 Q215 265 300 255 Z" fill="#111"/><path d="M480 390 Q478 310 520 288 Q555 290 540 335 Q520 375 482 392" fill="none" stroke="#111" stroke-width="19" stroke-linecap="round" stroke-linejoin="round" /><path d="M900 400 Q880 330 905 295 Q940 285 940 330 Q932 375 900 402" fill="none" stroke="#111" stroke-width="19" stroke-linecap="round" stroke-linejoin="round" /><path d="M482 385 Q475 520 440 660 Q410 780 350 870" fill="none" stroke="#111" stroke-width="34" stroke-linecap="round" stroke-linejoin="round" /><path d="M470 560 Q440 760 370 870 Q310 950 230 948 Q130 920 122 820 Q130 710 225 672 Q300 670 322 735 Q325 765 308 785 L295 775 Q305 745 285 720 Q250 695 210 715 Q165 750 170 815 Q190 880 250 890 Q330 870 385 760 Q420 660 440 560 Z" fill="#111"/><path d="M482 390 Q590 520 712 655" fill="none" stroke="#111" stroke-width="32" stroke-linecap="round" stroke-linejoin="round" /><path d="M900 402 Q810 520 712 655" fill="none" stroke="#111" stroke-width="32" stroke-linecap="round" stroke-linejoin="round" /><path d="M712 650 Q670 720 675 790 Q690 845 712 842 Q745 830 745 770 Q740 710 712 650" fill="none" stroke="#111" stroke-width="20" stroke-linecap="round" stroke-linejoin="round" /><path d="M900 400 Q950 320 1040 265 Q1100 232 1160 240" fill="none" stroke="#111" stroke-width="26" stroke-linecap="round" stroke-linejoin="round" /><path d="M1100 235 Q1230 225 1275 320 Q1285 410 1190 438 Q1130 435 1100 408 L1112 395 Q1150 412 1190 405 Q1230 385 1225 325 Q1205 265 1110 258 Z" fill="#111"/><path d="M900 400 Q915 540 945 680 Q975 800 1030 880" fill="none" stroke="#111" stroke-width="34" stroke-linecap="round" stroke-linejoin="round" /><path d="M905 560 Q935 760 1000 870 Q1060 950 1150 950 Q1240 925 1250 820 Q1235 715 1150 678 Q1075 675 1040 740 Q1032 765 1040 785 L1055 778 Q1050 750 1075 725 Q1110 700 1150 720 Q1200 750 1200 815 Q1185 880 1130 890 Q1050 870 1000 760 Q965 660 940 560 Z" fill="#111"/></g></svg><div style="position:absolute;left:52px;top:164px;width:1553px;height:1px;background:#484848;"></div><div style="position:absolute;left:52px;top:165px;width:1553px;height:1px;background:#000;"></div><div style="position:absolute;left:52px;top:164px;width:2px;height:804px;background:#000;"></div><div style="position:absolute;left:1604px;top:164px;width:1px;height:804px;background:#000;"></div><div style="position:absolute;left:52px;top:967px;width:1553px;height:1px;background:#000;"></div><div style="position:absolute;left:1605px;top:164px;width:1px;height:804px;background:#f0f0f0;"></div><div style="position:absolute;left:1606px;top:165px;width:16px;height:803px;background:#f0f0f0;"></div><div style="position:absolute;left:1606px;top:492px;width:15px;height:17px;background:#cdcdcd;"></div><svg style="position:absolute;left:1606px;top:166px;" width="16" height="16" viewBox="0 0 16 16"><path d="M4 11 L8 7 L12 11" fill="none" stroke="#606060" stroke-width="1.6"/></svg><svg style="position:absolute;left:1606px;top:950px;" width="16" height="16" viewBox="0 0 16 16"><path d="M4 6 L8 10 L12 6" fill="none" stroke="#606060" stroke-width="1.6"/></svg><div style="position:absolute;left:52px;top:968px;width:1554px;height:18px;background:#f0f0f0;"></div><div style="position:absolute;left:909px;top:969px;width:17px;height:15px;background:#cdcdcd;"></div><svg style="position:absolute;left:52px;top:969px;" width="16" height="16" viewBox="0 0 16 16"><path d="M11 4 L7 8 L11 12" fill="none" stroke="#606060" stroke-width="1.6"/></svg><svg style="position:absolute;left:1588px;top:969px;" width="16" height="16" viewBox="0 0 16 16"><path d="M6 4 L10 8 L6 12" fill="none" stroke="#606060" stroke-width="1.6"/></svg><div style="position:absolute;left:0px;top:0px;width:1920px;height:43px;background:#fff;"></div><svg style="position:absolute;left:2px;top:3px;" width="16" height="16" viewBox="0 0 24 23"><path d="M12 0 L13.7 6.7 L24 8.3 L13.7 9.9 L12 15 L10.3 9.9 L0 8.3 L10.3 6.7 Z" fill="#f01010"/><path d="M1.8 11.6 L10.6 10.6 L8.8 14.5 L7.3 21.8 Z M22.2 11.6 L13.4 10.6 L15.2 14.5 L16.7 21.8 Z" fill="#f01010"/><path d="M10.6 13.5 H13.4 L12 22.6 Z" fill="#f01010"/></svg><div class="ttl" style="position:absolute;left:23px;top:5px;white-space:nowrap;font-size:12px;letter-spacing:-0.109px;line-height:14px;color:#000;">RDWorksV8.01.48-20200618-[C:\Users\aaron\Kindled Arts\BossLaserDesigns\Laser Products 5.0\Misc\brochure holder for 4x9 brochure.rld-C:\Users\aaron\Downloads\1000011814.jpg]</div><svg style="position:absolute;left:0px;top:0px;" width="1920" height="22" viewBox="0 0 1920 22"><path d="M1799 10.5 H1809" stroke="#000" stroke-width="1"/><path d="M1844.5 7.5 H1852.5 V14.5 H1844.5 Z M1846.5 7.5 V5.5 H1854.5 V12.5 H1852.5" stroke="#000" stroke-width="1" fill="none"/><path d="M1890 5.5 L1900 15.5 M1900 5.5 L1890 15.5" stroke="#000" stroke-width="1.1"/></svg><div class="mnu" style="position:absolute;left:6.8px;top:26px;white-space:nowrap;font-size:12px;letter-spacing:-0.294px;line-height:14px;">File(F)</div><div class="mnu" style="position:absolute;left:52.9px;top:26px;white-space:nowrap;font-size:12px;letter-spacing:-0.310px;line-height:14px;">Edit(E)</div><div class="mnu" style="position:absolute;left:100.5px;top:26px;white-space:nowrap;font-size:12px;letter-spacing:-0.123px;line-height:14px;">Draw(D)</div><div class="mnu" style="position:absolute;left:157.9px;top:26px;white-space:nowrap;font-size:12px;letter-spacing:0.013px;line-height:14px;">Config(S)</div><div class="mnu" style="position:absolute;left:221.6px;top:26px;white-space:nowrap;font-size:12px;letter-spacing:0.017px;line-height:14px;">Handle(W)</div><div class="mnu" style="position:absolute;left:292.8px;top:26px;white-space:nowrap;font-size:12px;letter-spacing:-0.133px;line-height:14px;">Tool(T)</div><div class="mnu" style="position:absolute;left:342.9px;top:26px;white-space:nowrap;font-size:12px;letter-spacing:0.316px;line-height:14px;">Model(M)</div><div class="mnu" style="position:absolute;left:409.8px;top:26px;white-space:nowrap;font-size:12px;letter-spacing:-0.184px;line-height:14px;">View(V)</div><div class="mnu" style="position:absolute;left:463.5px;top:26px;white-space:nowrap;font-size:12px;letter-spacing:0.223px;line-height:14px;">Help(H)</div><div style="position:absolute;left:0px;top:43px;width:1920px;height:1px;background:#a0a0a0;"></div><div style="position:absolute;left:0px;top:44px;width:1920px;height:1px;background:#fff;"></div><div style="position:absolute;left:0px;top:76px;width:1920px;height:1px;background:#a0a0a0;"></div><div style="position:absolute;left:0px;top:77px;width:1920px;height:1px;background:#fff;"></div><div style="position:absolute;left:0px;top:109px;width:1491px;height:1px;background:#a0a0a0;"></div><div style="position:absolute;left:0px;top:110px;width:1491px;height:1px;background:#fff;"></div><div style="position:absolute;left:1491px;top:110px;width:1px;height:34px;background:#a0a0a0;"></div><div style="position:absolute;left:1492px;top:110px;width:1px;height:34px;background:#fff;"></div><div style="position:absolute;left:0px;top:144px;width:1625px;height:1px;background:#a0a0a0;"></div><div style="position:absolute;left:3px;top:49px;width:2px;height:2px;background:#c8c8c8;"></div><div style="position:absolute;left:3px;top:53px;width:2px;height:2px;background:#c8c8c8;"></div><div style="position:absolute;left:3px;top:57px;width:2px;height:2px;background:#c8c8c8;"></div><div style="position:absolute;left:3px;top:61px;width:2px;height:2px;background:#c8c8c8;"></div><div style="position:absolute;left:3px;top:65px;width:2px;height:2px;background:#c8c8c8;"></div><div style="position:absolute;left:3px;top:69px;width:2px;height:2px;background:#c8c8c8;"></div><div style="position:absolute;left:3px;top:82px;width:2px;height:2px;background:#c8c8c8;"></div><div style="position:absolute;left:3px;top:86px;width:2px;height:2px;background:#c8c8c8;"></div><div style="position:absolute;left:3px;top:90px;width:2px;height:2px;background:#c8c8c8;"></div><div style="position:absolute;left:3px;top:94px;width:2px;height:2px;background:#c8c8c8;"></div><div style="position:absolute;left:3px;top:98px;width:2px;height:2px;background:#c8c8c8;"></div><div style="position:absolute;left:3px;top:102px;width:2px;height:2px;background:#c8c8c8;"></div><div style="position:absolute;left:136px;top:82px;width:2px;height:2px;background:#c8c8c8;"></div><div style="position:absolute;left:136px;top:86px;width:2px;height:2px;background:#c8c8c8;"></div><div style="position:absolute;left:136px;top:90px;width:2px;height:2px;background:#c8c8c8;"></div><div style="position:absolute;left:136px;top:94px;width:2px;height:2px;background:#c8c8c8;"></div><div style="position:absolute;left:136px;top:98px;width:2px;height:2px;background:#c8c8c8;"></div><div style="position:absolute;left:136px;top:102px;width:2px;height:2px;background:#c8c8c8;"></div><div style="position:absolute;left:526px;top:116px;width:2px;height:2px;background:#c8c8c8;"></div><div style="position:absolute;left:526px;top:120px;width:2px;height:2px;background:#c8c8c8;"></div><div style="position:absolute;left:526px;top:124px;width:2px;height:2px;background:#c8c8c8;"></div><div style="position:absolute;left:526px;top:128px;width:2px;height:2px;background:#c8c8c8;"></div><div style="position:absolute;left:526px;top:132px;width:2px;height:2px;background:#c8c8c8;"></div><div style="position:absolute;left:526px;top:136px;width:2px;height:2px;background:#c8c8c8;"></div><div style="position:absolute;left:102px;top:46px;width:1px;height:28px;background:#a0a0a0;"></div><div style="position:absolute;left:103px;top:46px;width:1px;height:28px;background:#fff;"></div><div style="position:absolute;left:170px;top:46px;width:1px;height:28px;background:#a0a0a0;"></div><div style="position:absolute;left:171px;top:46px;width:1px;height:28px;background:#fff;"></div><div style="position:absolute;left:238px;top:46px;width:1px;height:28px;background:#a0a0a0;"></div><div style="position:absolute;left:239px;top:46px;width:1px;height:28px;background:#fff;"></div><div style="position:absolute;left:461px;top:46px;width:1px;height:28px;background:#a0a0a0;"></div><div style="position:absolute;left:462px;top:46px;width:1px;height:28px;background:#fff;"></div><div style="position:absolute;left:560px;top:46px;width:1px;height:28px;background:#a0a0a0;"></div><div style="position:absolute;left:561px;top:46px;width:1px;height:28px;background:#fff;"></div><div style="position:absolute;left:597px;top:46px;width:1px;height:28px;background:#a0a0a0;"></div><div style="position:absolute;left:598px;top:46px;width:1px;height:28px;background:#fff;"></div><svg style="position:absolute;left:0px;top:0px;" width="720" height="78" viewBox="0 0 720 78"><defs><radialGradient id="lensg" cx="0.4" cy="0.35" r="0.7"><stop offset="0" stop-color="#ffffff"/><stop offset="0.6" stop-color="#d0dcf8"/><stop offset="1" stop-color="#a8b8e8"/></radialGradient><linearGradient id="docg" x1="0" y1="0" x2="1" y2="1"><stop offset="0" stop-color="#ffffff"/><stop offset="0.5" stop-color="#e4eefc"/><stop offset="1" stop-color="#8cb4ec"/></linearGradient><linearGradient id="fold" x1="0" y1="0" x2="0" y2="1"><stop offset="0" stop-color="#fde58a"/><stop offset="1" stop-color="#f0b020"/></linearGradient><radialGradient id="gball" cx="0.4" cy="0.3" r="0.8"><stop offset="0" stop-color="#70d070"/><stop offset="0.6" stop-color="#20a030"/><stop offset="1" stop-color="#106018"/></radialGradient><radialGradient id="kball" cx="0.4" cy="0.3" r="0.8"><stop offset="0" stop-color="#888"/><stop offset="0.6" stop-color="#484848"/><stop offset="1" stop-color="#202020"/></radialGradient><linearGradient id="garr" x1="0" y1="0" x2="0" y2="1"><stop offset="0" stop-color="#80e060"/><stop offset="1" stop-color="#189018"/></linearGradient><linearGradient id="sky" x1="0" y1="0" x2="0" y2="1"><stop offset="0" stop-color="#9cc4ec"/><stop offset="1" stop-color="#e8f0f8"/></linearGradient><radialGradient id="rball" cx="0.35" cy="0.3" r="0.8"><stop offset="0" stop-color="#ff6060"/><stop offset="0.5" stop-color="#d01010"/><stop offset="1" stop-color="#700000"/></radialGradient><linearGradient id="scr" x1="0" y1="0" x2="1" y2="1"><stop offset="0" stop-color="#30b0e8"/><stop offset="0.5" stop-color="#58c8f0"/><stop offset="1" stop-color="#1890d0"/></linearGradient></defs><path d="M14.5 49.5 H27.5 L33 55 V71.5 H14.5 Z" fill="url(#docg)" stroke="#6888c8" stroke-width="1"/><path d="M27.5 49.5 V55 H33 Z" fill="#5890e0" stroke="#6888c8" stroke-width="0.8"/><path d="M43 69.5 V53.5 Q43 51 45.5 51 H51 L53.5 53.5 H60 Q61.5 53.5 61.5 55.5 V58" fill="#f0c040" stroke="#c89018" stroke-width="1"/><path d="M43.5 70.5 L47.5 58.5 Q48 57.5 49.5 57.5 H64.5 Q65.8 57.5 65 59 L61 70 Q60.6 70.8 59.5 70.8 H44 Z" fill="url(#fold)" stroke="#c89018" stroke-width="1"/><path d="M74.5 50.5 Q74.5 49.5 75.5 49.5 H93 Q94.5 49.5 94.5 51 V69 Q94.5 70.5 93 70.5 H77 L74.5 68 Z" fill="#3838b0" stroke="#20207a" stroke-width="1"/><rect x="78" y="49.5" width="13" height="10" fill="#fff"/><path d="M80 52.5 H89 M80 54.5 H89 M80 56.5 H89" stroke="#b8b8c8" stroke-width="0.8"/><rect x="79.5" y="63" width="10" height="7.5" fill="#d8dcf0" stroke="#20207a" stroke-width="0.6"/><rect x="81.5" y="64.5" width="3" height="5" fill="#28288a"/><rect x="113.5" y="59.5" width="17" height="12" fill="url(#sky)" stroke="#9098a8" stroke-width="1"/><path d="M114.5 70.0 l4 -4.5 l3 2.5 l3 -3 l5 5 z" fill="#304878"/><path d="M118.5 48.5 H126.5 V53.5 H129.5 L122.5 60.5 L115.5 53.5 H118.5 Z" fill="url(#garr)" stroke="#187818" stroke-width="0.8"/><rect x="142.5" y="48.5" width="17" height="12" fill="url(#sky)" stroke="#9098a8" stroke-width="1"/><path d="M143.5 59.0 l4 -4.5 l3 2.5 l3 -3 l5 5 z" fill="#304878"/><path d="M147 72 H155 V66.5 H158 L151 59.5 L144 66.5 H147 Z" fill="url(#garr)" stroke="#187818" stroke-width="0.8"/><circle cx="187.5" cy="60.5" r="9.8" fill="url(#gball)" stroke="#0c5014" stroke-width="1"/><path d="M182 60.5 L187.5 55 V58.5 H193 V62.5 H187.5 V66 Z" fill="#fff"/><circle cx="218.5" cy="60.5" r="9.8" fill="url(#kball)" stroke="#181818" stroke-width="1"/><path d="M224 60.5 L218.5 55 V58.5 H213 V62.5 H218.5 V66 Z" fill="#b0b0b0"/><line x1="259.2" y1="62.3" x2="265.7" y2="68.8" stroke="#8a6a28" stroke-width="3.6" stroke-linecap="round"/><line x1="259.5" y1="62.6" x2="265.5" y2="68.6" stroke="#d8a020" stroke-width="2.2" stroke-linecap="round"/><line x1="257.7" y1="60.8" x2="260.2" y2="63.3" stroke="#8890c0" stroke-width="2.4"/><circle cx="253.7" cy="56.8" r="6.3" fill="url(#lensg)" stroke="#7878b8" stroke-width="1.5"/><path d="M249.7 56.8 h8 M253.7 52.8 v8" stroke="#2848a8" stroke-width="1.2" fill="none"/><path d="M253.7 52.4 l-1.6 1.6 M253.7 52.4 l1.6 1.6 M253.7 61.2 l-1.6 -1.6 M253.7 61.2 l1.6 -1.6 M249.3 56.8 l1.6 -1.6 M249.3 56.8 l1.6 1.6 M258.1 56.8 l-1.6 -1.6 M258.1 56.8 l-1.6 1.6" stroke="#2848a8" stroke-width="1" fill="none"/><line x1="291.1" y1="62.3" x2="297.6" y2="68.8" stroke="#8a6a28" stroke-width="3.6" stroke-linecap="round"/><line x1="291.4" y1="62.6" x2="297.4" y2="68.6" stroke="#d8a020" stroke-width="2.2" stroke-linecap="round"/><line x1="289.6" y1="60.8" x2="292.1" y2="63.3" stroke="#8890c0" stroke-width="2.4"/><circle cx="285.6" cy="56.8" r="6.3" fill="url(#lensg)" stroke="#7878b8" stroke-width="1.5"/><path d="M282.6 56.8 h6 M285.6 53.8 v6" stroke="#2848a8" stroke-width="2" fill="none"/><line x1="322.4" y1="62.3" x2="328.9" y2="68.8" stroke="#8a6a28" stroke-width="3.6" stroke-linecap="round"/><line x1="322.7" y1="62.6" x2="328.7" y2="68.6" stroke="#d8a020" stroke-width="2.2" stroke-linecap="round"/><line x1="320.9" y1="60.8" x2="323.4" y2="63.3" stroke="#8890c0" stroke-width="2.4"/><circle cx="316.9" cy="56.8" r="6.3" fill="url(#lensg)" stroke="#7878b8" stroke-width="1.5"/><path d="M313.9 56.8 h6" stroke="#2848a8" stroke-width="2" fill="none"/><line x1="352.4" y1="62.3" x2="358.9" y2="68.8" stroke="#8a6a28" stroke-width="3.6" stroke-linecap="round"/><line x1="352.7" y1="62.6" x2="358.7" y2="68.6" stroke="#d8a020" stroke-width="2.2" stroke-linecap="round"/><line x1="350.9" y1="60.8" x2="353.4" y2="63.3" stroke="#8890c0" stroke-width="2.4"/><circle cx="346.9" cy="56.8" r="6.3" fill="url(#lensg)" stroke="#7878b8" stroke-width="1.5"/><path d="M344.2 53.1 h3.5 l2 2 v5.5 h-5.5 z" stroke="#2848a8" stroke-width="1.2" fill="#e8f0ff"/><line x1="384.2" y1="62.3" x2="390.7" y2="68.8" stroke="#404040" stroke-width="3.6" stroke-linecap="round"/><line x1="384.5" y1="62.6" x2="390.5" y2="68.6" stroke="#707070" stroke-width="2.2" stroke-linecap="round"/><line x1="382.7" y1="60.8" x2="385.2" y2="63.3" stroke="#606060" stroke-width="2.4"/><circle cx="378.7" cy="56.8" r="6.3" fill="#9a9a9a" stroke="#585858" stroke-width="1.5"/><rect x="375.1" y="56.2" width="1.2" height="1.2" fill="#505050"/><rect x="378.1" y="53.2" width="1.2" height="1.2" fill="#505050"/><rect x="378.1" y="56.2" width="1.2" height="1.2" fill="#505050"/><rect x="378.1" y="59.2" width="1.2" height="1.2" fill="#505050"/><rect x="381.1" y="56.2" width="1.2" height="1.2" fill="#505050"/><line x1="414.2" y1="62.3" x2="420.7" y2="68.8" stroke="#8a6a28" stroke-width="3.6" stroke-linecap="round"/><line x1="414.5" y1="62.6" x2="420.5" y2="68.6" stroke="#d8a020" stroke-width="2.2" stroke-linecap="round"/><line x1="412.7" y1="60.8" x2="415.2" y2="63.3" stroke="#8890c0" stroke-width="2.4"/><circle cx="408.7" cy="56.8" r="6.3" fill="url(#lensg)" stroke="#7878b8" stroke-width="1.5"/><text x="408.7" y="60.2" font-family="Liberation Sans" font-weight="bold" font-size="9.5" text-anchor="middle" fill="#2848a8">A</text><line x1="446.1" y1="62.3" x2="452.6" y2="68.8" stroke="#8a6a28" stroke-width="3.6" stroke-linecap="round"/><line x1="446.4" y1="62.6" x2="452.4" y2="68.6" stroke="#d8a020" stroke-width="2.2" stroke-linecap="round"/><line x1="444.6" y1="60.8" x2="447.1" y2="63.3" stroke="#8890c0" stroke-width="2.4"/><circle cx="440.6" cy="56.8" r="6.3" fill="url(#lensg)" stroke="#7878b8" stroke-width="1.5"/><rect x="473.5" y="53.5" width="13" height="12" fill="#c0c0c0"/><path d="M473.5 65.5 V53.5 H486.5 V60" stroke="#0000ff" stroke-width="1.2" fill="none"/><path d="M486.5 60 V65.5 H473.5" stroke="#000" stroke-width="1.2" fill="none"/><path d="M472.0 54.0 h3 M473.5 52.5 v3" stroke="#ff0000" stroke-width="1"/><path d="M485.0 54.0 h3 M486.5 52.5 v3" stroke="#ff0000" stroke-width="1"/><path d="M472.5 65.5 h3 M474.0 64.0 v3" stroke="#ff0000" stroke-width="1"/><path d="M485.0 65.0 h3 M486.5 63.5 v3" stroke="#ff0000" stroke-width="1"/><circle cx="513.5" cy="61.5" r="5.3" fill="#808080" stroke="#202020" stroke-width="1"/><rect x="512" y="60" width="3" height="3" fill="#e0e0e0" stroke="#000" stroke-width="0.8"/><path d="M506 56.5 H512.5" stroke="#000" stroke-width="1" fill="none"/><rect x="503" y="55" width="3" height="3" fill="#fff" stroke="#000" stroke-width="0.9"/><path d="M534.5 66.8 L536.5 61.5 L544.5 54.2 L547 56.5 L539.5 64.5 Z" fill="#c8b020" stroke="#302800" stroke-width="1"/><path d="M534.5 66.8 L538 63" stroke="#000" stroke-width="1.3"/><path d="M543.5 54.5 L547 57.5" stroke="#909090" stroke-width="2"/><path d="M540.5 62 Q545 63.5 547.5 61 Q550 58 549.7 54.5" stroke="#000" stroke-width="1.1" fill="none"/><rect x="568" y="51.3" width="22" height="17" fill="#080808"/><rect x="570" y="53.3" width="18" height="12" fill="url(#scr)"/><path d="M577 53.3 L580 53.3 L582.5 65.3 L579.5 65.3 Z" fill="#90dcf8" opacity="0.6"/><rect x="586" y="66" width="1.5" height="1.2" fill="#e04040"/><rect x="588" y="66" width="1.2" height="1.2" fill="#40c0e0"/><path d="M576.5 68 H581.5 L582.5 69.8 H586 V71.6 H573 V69.8 H575.5 Z" fill="#000"/><rect x="614.4" y="60.2" width="10.6" height="10.6" fill="#fff000"/><rect x="616.4" y="62.2" width="6.6" height="6.6" fill="#e83848"/><circle cx="611.0" cy="55.9" r="4.4" fill="url(#rball)" stroke="#10d010" stroke-width="1.2"/><rect x="605.0" y="50.0" width="2" height="2" fill="#000"/><rect x="615.0" y="50.0" width="2" height="2" fill="#000"/><rect x="625.0" y="50.0" width="2" height="2" fill="#000"/><rect x="625.0" y="60.0" width="2" height="2" fill="#000"/><rect x="605.0" y="70.0" width="2" height="2" fill="#000"/><rect x="615.0" y="70.0" width="2" height="2" fill="#000"/><rect x="625.0" y="70.0" width="2" height="2" fill="#000"/><text x="604.5" y="70.3" font-family="Liberation Serif" font-weight="bold" font-size="10" fill="#ff0000">A</text><rect x="645.6" y="60.2" width="10.6" height="10.6" fill="#fff000"/><rect x="647.6" y="62.2" width="6.6" height="6.6" fill="#e83848"/><circle cx="642.2" cy="55.9" r="4.4" fill="url(#rball)" stroke="#10d010" stroke-width="1.2"/><rect x="636.2" y="50.0" width="2" height="2" fill="#000"/><rect x="646.2" y="50.0" width="2" height="2" fill="#000"/><rect x="656.2" y="50.0" width="2" height="2" fill="#000"/><rect x="656.2" y="60.0" width="2" height="2" fill="#000"/><rect x="636.2" y="70.0" width="2" height="2" fill="#000"/><rect x="646.2" y="70.0" width="2" height="2" fill="#000"/><rect x="656.2" y="70.0" width="2" height="2" fill="#000"/><rect x="636.2" y="60.5" width="2" height="2" fill="#000"/><rect x="677.4" y="60.0" width="10.6" height="10.6" fill="#fff000"/><rect x="679.4" y="62.0" width="6.6" height="6.6" fill="#e83848"/><circle cx="673.4" cy="55.9" r="4.4" fill="url(#rball)" stroke="#10d010" stroke-width="1.2"/><rect x="667.4" y="50.0" width="2" height="2" fill="#000"/><rect x="672.4" y="50.0" width="2" height="2" fill="#000"/><rect x="677.4" y="50.0" width="2" height="2" fill="#000"/><rect x="667.4" y="55.0" width="2" height="2" fill="#000"/><rect x="677.4" y="55.0" width="2" height="2" fill="#000"/><rect x="667.4" y="60.5" width="2" height="2" fill="#000"/><rect x="672.4" y="60.5" width="2" height="2" fill="#000"/><rect x="677.4" y="58.5" width="2" height="2" fill="#000"/><rect x="681.4" y="58.5" width="2" height="2" fill="#000"/><rect x="687.4" y="58.5" width="2" height="2" fill="#000"/><rect x="677.4" y="65.0" width="2" height="2" fill="#000"/><rect x="687.4" y="65.0" width="2" height="2" fill="#000"/><rect x="677.4" y="70.0" width="2" height="2" fill="#000"/><rect x="682.4" y="70.0" width="2" height="2" fill="#000"/><rect x="687.4" y="70.0" width="2" height="2" fill="#000"/></svg><div style="position:absolute;left:131px;top:79px;width:1px;height:29px;background:#a0a0a0;"></div><div style="position:absolute;left:132px;top:79px;width:1px;height:29px;background:#fff;"></div><div style="position:absolute;left:388px;top:79px;width:1px;height:29px;background:#a0a0a0;"></div><div style="position:absolute;left:389px;top:79px;width:1px;height:29px;background:#fff;"></div><div style="position:absolute;left:620px;top:79px;width:1px;height:29px;background:#a0a0a0;"></div><div style="position:absolute;left:621px;top:79px;width:1px;height:29px;background:#fff;"></div><div style="position:absolute;left:420px;top:79px;width:30px;height:28px;background:#c0c0c0;"></div><div style="position:absolute;left:420px;top:79px;width:30px;height:1px;background:#ffffff;"></div><div style="position:absolute;left:420px;top:79px;width:1px;height:28px;background:#ffffff;"></div><div style="position:absolute;left:420px;top:106px;width:30px;height:1px;background:#707070;"></div><div style="position:absolute;left:449px;top:79px;width:1px;height:28px;background:#707070;"></div><div style="position:absolute;left:421px;top:105px;width:28px;height:1px;background:#888888;"></div><div style="position:absolute;left:448px;top:80px;width:1px;height:26px;background:#888888;"></div><div style="position:absolute;left:452px;top:79px;width:30px;height:28px;background:#c0c0c0;"></div><div style="position:absolute;left:452px;top:79px;width:30px;height:1px;background:#ffffff;"></div><div style="position:absolute;left:452px;top:79px;width:1px;height:28px;background:#ffffff;"></div><div style="position:absolute;left:452px;top:106px;width:30px;height:1px;background:#707070;"></div><div style="position:absolute;left:481px;top:79px;width:1px;height:28px;background:#707070;"></div><div style="position:absolute;left:453px;top:105px;width:28px;height:1px;background:#888888;"></div><div style="position:absolute;left:480px;top:80px;width:1px;height:26px;background:#888888;"></div><div style="position:absolute;left:486px;top:79px;width:30px;height:28px;background:#c0c0c0;"></div><div style="position:absolute;left:486px;top:79px;width:30px;height:1px;background:#ffffff;"></div><div style="position:absolute;left:486px;top:79px;width:1px;height:28px;background:#ffffff;"></div><div style="position:absolute;left:486px;top:106px;width:30px;height:1px;background:#707070;"></div><div style="position:absolute;left:515px;top:79px;width:1px;height:28px;background:#707070;"></div><div style="position:absolute;left:487px;top:105px;width:28px;height:1px;background:#888888;"></div><div style="position:absolute;left:514px;top:80px;width:1px;height:26px;background:#888888;"></div><div style="position:absolute;left:519px;top:79px;width:30px;height:28px;background:#c0c0c0;"></div><div style="position:absolute;left:519px;top:79px;width:30px;height:1px;background:#ffffff;"></div><div style="position:absolute;left:519px;top:79px;width:1px;height:28px;background:#ffffff;"></div><div style="position:absolute;left:519px;top:106px;width:30px;height:1px;background:#707070;"></div><div style="position:absolute;left:548px;top:79px;width:1px;height:28px;background:#707070;"></div><div style="position:absolute;left:520px;top:105px;width:28px;height:1px;background:#888888;"></div><div style="position:absolute;left:547px;top:80px;width:1px;height:26px;background:#888888;"></div><div style="position:absolute;left:552px;top:79px;width:30px;height:28px;background:#c0c0c0;"></div><div style="position:absolute;left:552px;top:79px;width:30px;height:1px;background:#ffffff;"></div><div style="position:absolute;left:552px;top:79px;width:1px;height:28px;background:#ffffff;"></div><div style="position:absolute;left:552px;top:106px;width:30px;height:1px;background:#707070;"></div><div style="position:absolute;left:581px;top:79px;width:1px;height:28px;background:#707070;"></div><div style="position:absolute;left:553px;top:105px;width:28px;height:1px;background:#888888;"></div><div style="position:absolute;left:580px;top:80px;width:1px;height:26px;background:#888888;"></div><div style="position:absolute;left:585px;top:79px;width:30px;height:28px;background:#c0c0c0;"></div><div style="position:absolute;left:585px;top:79px;width:30px;height:1px;background:#ffffff;"></div><div style="position:absolute;left:585px;top:79px;width:1px;height:28px;background:#ffffff;"></div><div style="position:absolute;left:585px;top:106px;width:30px;height:1px;background:#707070;"></div><div style="position:absolute;left:614px;top:79px;width:1px;height:28px;background:#707070;"></div><div style="position:absolute;left:586px;top:105px;width:28px;height:1px;background:#888888;"></div><div style="position:absolute;left:613px;top:80px;width:1px;height:26px;background:#888888;"></div><svg style="position:absolute;left:0px;top:0px;" width="720" height="110" viewBox="0 0 720 110"><path d="M10.5 88 H33.5 V98.5 H31.5 L30 100.5 H14 L12.5 98.5 H10.5 Z" fill="#000"/><circle cx="28" cy="93" r="3.3" fill="#fff"/><circle cx="28" cy="93" r="1.4" fill="#000"/><rect x="13.5" y="90.5" width="1.6" height="5" fill="#fff"/><rect x="16.5" y="90.5" width="1.6" height="5" fill="#fff"/><path d="M43.3 102 L57.8 87.3" stroke="#202020" stroke-width="2"/><path d="M51.8 88.3 L58 87 L56.6 93.3" stroke="#202020" stroke-width="1.4" fill="none"/><path d="M57 84.5 H63.2 M60.1 81.3 V87.7" stroke="#202020" stroke-width="1.1"/><rect x="79.5" y="82.5" width="9" height="21" fill="#fff" stroke="#202020" stroke-width="1"/><path d="M80 85.5 h5" stroke="#0000ff" stroke-width="1"/><path d="M80 88.5 h3" stroke="#0000ff" stroke-width="1"/><path d="M80 91.5 h5" stroke="#0000ff" stroke-width="1"/><path d="M80 94.5 h3" stroke="#0000ff" stroke-width="1"/><path d="M80 97.5 h5" stroke="#0000ff" stroke-width="1"/><path d="M80 100.5 h3" stroke="#0000ff" stroke-width="1"/><text x="117" y="100.6" text-anchor="middle" font-family="Liberation Sans" font-weight="bold" font-size="18.5" fill="#108080" textLength="17" lengthAdjust="spacingAndGlyphs">M</text><path d="M148 99.5 Q149.5 91 154 92.5 Q157.5 96.5 160.5 91.5 Q162.5 89 162.8 87.5" stroke="#000" stroke-width="1.5" fill="none"/><text x="178" y="97" font-family="Liberation Serif" font-size="9.5" fill="#202020" textLength="16.5" lengthAdjust="spacingAndGlyphs">BMP</text><rect x="210.5" y="86.5" width="14" height="13" fill="#fff" stroke="#000" stroke-width="1"/><path d="M248.5 88.5 L253.5 96.5 L243.5 96.5" stroke="#0000ff" stroke-width="1" fill="none"/><rect x="246.5" y="86.5" width="4" height="4" fill="#00e000" stroke="#000" stroke-width="1"/><rect x="241.5" y="94.5" width="4" height="4" fill="#00e000" stroke="#000" stroke-width="1"/><rect x="251.5" y="94.5" width="4" height="4" fill="#00e000" stroke="#000" stroke-width="1"/><path d="M273.5 85 V100 M285.5 85 V100" stroke="#000" stroke-width="1.2"/><rect x="272.2" y="90" width="2.6" height="2.6" fill="#fff" stroke="#000" stroke-width="0.9"/><rect x="272.2" y="95.3" width="2.6" height="2.6" fill="#fff" stroke="#000" stroke-width="0.9"/><path d="M276.5 92 H280.5 V90.3 L283.8 93.9 L280.5 97.5 V95.8 H276.5 Z" fill="#707070" stroke="#000" stroke-width="0.9"/><rect x="284.2" y="92.6" width="2.6" height="2.6" fill="#fff" stroke="#000" stroke-width="0.9"/><path d="M304.4 85 V100 M316.6 85 V100" stroke="#000" stroke-width="1.2"/><path d="M305.3 86 l2.4 2.6 m0 -2.6 l-2.4 2.6" stroke="#000" stroke-width="0.8"/><path d="M306.6 92 H311.6 V90.3 L315 93.9 L311.6 97.5 V95.8 H306.6 Z" fill="#707070" stroke="#000" stroke-width="0.9"/><path d="M337.8 86.2 H345.8 Q347.6 86.2 347.6 88 V90 Q347.6 92 349.6 93.3 Q350.8 94.3 350.8 96 V97.3 Q350.8 99.6 348.4 99.6 H335.2 Q332.8 99.6 332.8 97.3 V96 Q332.8 94.3 334 93.3 Q336 92 336 90 V88 Q336 86.2 337.8 86.2 Z" fill="#f0f0f0" stroke="#000" stroke-width="3"/><path d="M337.8 86.2 H345.8 Q347.6 86.2 347.6 88 V90 Q347.6 92 349.6 93.3 Q350.8 94.3 350.8 96 V97.3 Q350.8 99.6 348.4 99.6 H335.2 Q332.8 99.6 332.8 97.3 V96 Q332.8 94.3 334 93.3 Q336 92 336 90 V88 Q336 86.2 337.8 86.2 Z" fill="none" stroke="#f4f4f4" stroke-width="0.9"/><rect x="330.8" y="93.5" width="1.8" height="4.6" fill="#000"/><rect x="351" y="93.5" width="1.8" height="4.6" fill="#000"/><rect x="364.7" y="85.8" width="14.6" height="14.4" fill="#fff" stroke="#000" stroke-width="1.3"/><path d="M372.5 89.5 h5.5" stroke="#e0e0e0" stroke-width="0.8"/><ellipse cx="367.8" cy="88.6" rx="1.6" ry="1.3" fill="#000"/><path d="M367 88.3 l1.2 1.2 l4 -3.3" stroke="#ff0000" stroke-width="1" fill="none"/><path d="M372.5 93.5 h5.5" stroke="#e0e0e0" stroke-width="0.8"/><ellipse cx="367.8" cy="92.6" rx="1.6" ry="1.3" fill="#000"/><path d="M367 92.3 l1.2 1.2 l4 -3.3" stroke="#0000ff" stroke-width="1" fill="none"/><path d="M372.5 97.5 h5.5" stroke="#e0e0e0" stroke-width="0.8"/><ellipse cx="367.8" cy="96.6" rx="1.6" ry="1.3" fill="#000"/><path d="M367 96.3 l1.2 1.2 l4 -3.3" stroke="#00d000" stroke-width="1" fill="none"/><rect x="397.5" y="86.5" width="11" height="11" fill="#fff" stroke="#a0a0a0" stroke-width="1"/><path d="M398.5 97 V87.5 H408" stroke="#696969" stroke-width="1" fill="none"/><defs><radialGradient id="wcg" cx="0.55" cy="0.3" r="0.7"><stop offset="0" stop-color="#ffffff"/><stop offset="0.7" stop-color="#e0e0e0"/><stop offset="1" stop-color="#b0b0b0"/></radialGradient><radialGradient id="wcl" cx="0.4" cy="0.4" r="0.7"><stop offset="0" stop-color="#909090"/><stop offset="1" stop-color="#303030"/></radialGradient></defs><ellipse cx="436" cy="101" rx="7.5" ry="3.5" fill="#d8d8d8"/><circle cx="435" cy="91" r="9.5" fill="url(#wcg)"/><circle cx="429.5" cy="90" r="4" fill="url(#wcl)"/><path d="M457.5 102 V84.5 H475 V97" stroke="#747474" stroke-width="2.4" fill="none" stroke-dasharray="4.5 2"/><path d="M457.5 101.5 H470" stroke="#747474" stroke-width="2.4" fill="none" stroke-dasharray="4.5 2"/><path d="M470.5 101 H479 M474.8 96.5 V105" stroke="#747474" stroke-width="2"/><path d="M489.3 92.2 L494.5 97.3 L506.3 84.8" stroke="#8c8c8c" stroke-width="4.4" fill="none" stroke-linejoin="miter"/><path d="M496.5 94.3 L499.5 97.3 L509.8 86" stroke="#8c8c8c" stroke-width="4.4" fill="none" stroke-linejoin="miter"/><path d="M489.3 92.2 L494.5 97.3 L506.3 84.8" stroke="#f4f4f4" stroke-width="2.4" fill="none" stroke-linejoin="miter"/><path d="M496.5 94.3 L499.5 97.3 L509.8 86" stroke="#f4f4f4" stroke-width="2.4" fill="none" stroke-linejoin="miter"/><path d="M532.5 82.2 L542.6 86.5 L534.8 101.7 L525 97.2 Z" stroke="#202020" stroke-width="1" fill="none"/><path d="M521 102.5 H543" stroke="#404040" stroke-width="1"/><ellipse cx="565.6" cy="91.5" rx="11.2" ry="6.3" stroke="#202020" stroke-width="1" fill="none"/><circle cx="565.6" cy="91.5" r="4.9" stroke="#202020" stroke-width="1" fill="#d0d0d0"/><path d="M557.5 102.8 L573.8 80.2" stroke="#202020" stroke-width="1"/><defs><linearGradient id="gearg" x1="0" y1="0" x2="1" y2="1"><stop offset="0" stop-color="#ffffff"/><stop offset="0.5" stop-color="#e0e0e0"/><stop offset="1" stop-color="#808080"/></linearGradient></defs><path d="M609.0 93.5 L607.4 97.3 L604.3 96.4 L603.7 97.0 L604.6 100.1 L600.8 101.7 L599.2 98.9 L598.4 98.9 L596.8 101.7 L593.0 100.1 L593.9 97.0 L593.3 96.4 L590.2 97.3 L588.6 93.5 L591.4 91.9 L591.4 91.1 L588.6 89.5 L590.2 85.7 L593.3 86.6 L593.9 86.0 L593.0 82.9 L596.8 81.3 L598.4 84.1 L599.2 84.1 L600.8 81.3 L604.6 82.9 L603.7 86.0 L604.3 86.6 L607.4 85.7 L609.0 89.5 L606.2 91.1 L606.2 91.9 Z" fill="url(#gearg)" stroke="#808080" stroke-width="0.7"/><circle cx="598.8" cy="91.5" r="4.2" fill="#606060"/><circle cx="598.8" cy="91.5" r="2" fill="#f0f0f0"/></svg><div style="position:absolute;left:3px;top:115px;white-space:nowrap;font-size:10px;line-height:13px;">X</div><div style="position:absolute;left:3px;top:131px;white-space:nowrap;font-size:10px;line-height:13px;">Y</div><div style="position:absolute;left:13px;top:113px;width:46px;height:15px;background:#f0f0f0;box-sizing:border-box;border:1px solid;border-color:#a0a0a0 #fff #fff #a0a0a0;"><div style="position:absolute;left:0;top:0;right:0;bottom:0;border:1px solid;border-color:#696969 #e3e3e3 #e3e3e3 #696969;box-sizing:border-box;"></div><div class="edt" style="position:absolute;left:5px;top:0;bottom:0;display:flex;align-items:center;font-size:11px;color:#808080;white-space:nowrap;overflow:hidden;right:2px;">646.075</div></div><div style="position:absolute;left:13px;top:129px;width:46px;height:15px;background:#f0f0f0;box-sizing:border-box;border:1px solid;border-color:#a0a0a0 #fff #fff #a0a0a0;"><div style="position:absolute;left:0;top:0;right:0;bottom:0;border:1px solid;border-color:#696969 #e3e3e3 #e3e3e3 #696969;box-sizing:border-box;"></div><div class="edt" style="position:absolute;left:5px;top:0;bottom:0;display:flex;align-items:center;font-size:11px;color:#808080;white-space:nowrap;overflow:hidden;right:2px;">252.741</div></div><div style="position:absolute;left:61px;top:114px;white-space:nowrap;font-size:10.5px;letter-spacing:-0.596px;line-height:13px;">mm</div><div style="position:absolute;left:61px;top:130px;white-space:nowrap;font-size:10.5px;letter-spacing:-0.596px;line-height:13px;">mm</div><div style="position:absolute;left:84px;top:112px;width:18px;height:33px;background:#c8c8c8;"></div><div style="position:absolute;left:86px;top:128px;width:14px;height:1px;background:#a8a8a8;"></div><svg style="position:absolute;left:84px;top:112px;" width="18" height="33" viewBox="0 0 18 33"><path d="M3 9.5 H15" stroke="#000" stroke-width="1.6"/><path d="M2.5 9.5 L6 6.3 V12.7 Z M15.5 9.5 L12 6.3 V12.7 Z" fill="#000"/><path d="M9 21 V31" stroke="#000" stroke-width="1.6"/><path d="M9 19.5 L6 23 H12 Z M9 32.5 L6 29 H12 Z" fill="#000"/></svg><div style="position:absolute;left:103px;top:113px;width:46px;height:15px;background:#f0f0f0;box-sizing:border-box;border:1px solid;border-color:#a0a0a0 #fff #fff #a0a0a0;"><div style="position:absolute;left:0;top:0;right:0;bottom:0;border:1px solid;border-color:#696969 #e3e3e3 #e3e3e3 #696969;box-sizing:border-box;"></div><div class="edt" style="position:absolute;left:6px;top:0;bottom:0;display:flex;align-items:center;font-size:11px;color:#808080;white-space:nowrap;overflow:hidden;right:2px;">56.161</div></div><div style="position:absolute;left:103px;top:129px;width:46px;height:15px;background:#f0f0f0;box-sizing:border-box;border:1px solid;border-color:#a0a0a0 #fff #fff #a0a0a0;"><div style="position:absolute;left:0;top:0;right:0;bottom:0;border:1px solid;border-color:#696969 #e3e3e3 #e3e3e3 #696969;box-sizing:border-box;"></div><div class="edt" style="position:absolute;left:6px;top:0;bottom:0;display:flex;align-items:center;font-size:11px;color:#808080;white-space:nowrap;overflow:hidden;right:2px;">56.161</div></div><div style="position:absolute;left:151px;top:114px;white-space:nowrap;font-size:10.5px;letter-spacing:-0.596px;line-height:13px;">mm</div><div style="position:absolute;left:151px;top:130px;white-space:nowrap;font-size:10.5px;letter-spacing:-0.596px;line-height:13px;">mm</div><div style="position:absolute;left:177px;top:112px;width:1px;height:32px;background:#a0a0a0;"></div><div style="position:absolute;left:178px;top:112px;width:1px;height:32px;background:#fff;"></div><div style="position:absolute;left:180px;top:113px;width:31px;height:15px;background:#f0f0f0;box-sizing:border-box;border:1px solid;border-color:#a0a0a0 #fff #fff #a0a0a0;"><div style="position:absolute;left:0;top:0;right:0;bottom:0;border:1px solid;border-color:#696969 #e3e3e3 #e3e3e3 #696969;box-sizing:border-box;"></div><div class="edt" style="position:absolute;left:6px;top:0;bottom:0;display:flex;align-items:center;font-size:11px;color:#808080;white-space:nowrap;overflow:hidden;right:2px;">100</div></div><div style="position:absolute;left:180px;top:129px;width:31px;height:15px;background:#f0f0f0;box-sizing:border-box;border:1px solid;border-color:#a0a0a0 #fff #fff #a0a0a0;"><div style="position:absolute;left:0;top:0;right:0;bottom:0;border:1px solid;border-color:#696969 #e3e3e3 #e3e3e3 #696969;box-sizing:border-box;"></div><div class="edt" style="position:absolute;left:6px;top:0;bottom:0;display:flex;align-items:center;font-size:11px;color:#808080;white-space:nowrap;overflow:hidden;right:2px;">100</div></div><div style="position:absolute;left:216.5px;top:116px;white-space:nowrap;font-size:11px;line-height:13px;">%</div><div style="position:absolute;left:216.5px;top:132px;white-space:nowrap;font-size:11px;line-height:13px;">%</div><div style="position:absolute;left:234px;top:115px;width:24px;height:26px;background:#f0f0f0;border:1px solid #000;"></div><div style="position:absolute;left:235px;top:116px;width:22px;height:24px;border:1px solid;border-color:#808080 #fff #fff #808080;"></div><div style="position:absolute;left:260px;top:115px;width:23px;height:26px;background:#f0f0f0;"></div><div style="position:absolute;left:260px;top:115px;width:23px;height:1px;background:#ffffff;"></div><div style="position:absolute;left:260px;top:115px;width:1px;height:26px;background:#ffffff;"></div><div style="position:absolute;left:260px;top:140px;width:23px;height:1px;background:#707070;"></div><div style="position:absolute;left:282px;top:115px;width:1px;height:26px;background:#707070;"></div><div style="position:absolute;left:261px;top:139px;width:21px;height:1px;background:#888888;"></div><div style="position:absolute;left:281px;top:116px;width:1px;height:24px;background:#888888;"></div><div style="position:absolute;left:290px;top:115px;width:23px;height:26px;background:#f0f0f0;"></div><div style="position:absolute;left:290px;top:115px;width:23px;height:1px;background:#ffffff;"></div><div style="position:absolute;left:290px;top:115px;width:1px;height:26px;background:#ffffff;"></div><div style="position:absolute;left:290px;top:140px;width:23px;height:1px;background:#707070;"></div><div style="position:absolute;left:312px;top:115px;width:1px;height:26px;background:#707070;"></div><div style="position:absolute;left:291px;top:139px;width:21px;height:1px;background:#888888;"></div><div style="position:absolute;left:311px;top:116px;width:1px;height:24px;background:#888888;"></div><svg style="position:absolute;left:0px;top:0px;" width="1200" height="146" viewBox="0 0 1200 146"><path d="M241.5 128 V122.5 Q241.5 119.5 244.5 119.5 H249.5 V123" stroke="#000" stroke-width="1.6" fill="none"/><rect x="240" y="128" width="13.5" height="10" fill="#000"/><rect x="242.5" y="130.5" width="8.5" height="5" rx="1.5" fill="#404040" stroke="#909090" stroke-width="0.8"/><rect x="263.5" y="120.5" width="16" height="16" fill="#fff" stroke="#000" stroke-width="1"/><path d="M268.5 120.5 V136.5 M274.5 120.5 V136.5 M263.5 125.5 H279.5 M263.5 131.5 H279.5" stroke="#000" stroke-width="1"/><rect x="269" y="126" width="5" height="5" fill="#000"/><rect x="271" y="128" width="3" height="3" fill="#606060"/><rect x="292.5" y="119.5" width="18" height="18" fill="none" stroke="#000" stroke-width="1" stroke-dasharray="2 1.5"/><rect x="292.5" y="128.5" width="9" height="9" fill="#fff" stroke="#000" stroke-width="1"/><path d="M296.5 126.5 V122.5 M294.8 124 L296.5 122 L298.2 124 M304 133.5 H308.5 M307 131.8 L309 133.5 L307 135.2" stroke="#000" stroke-width="0.9" fill="none"/><path d="M348.5 124 A7 7 0 1 0 350.3 128.5" stroke="#000" stroke-width="1.2" fill="none"/><path d="M346.5 127 H353.5 L350 131.5 Z" fill="#000"/><circle cx="402" cy="123.6" r="2.4" stroke="#000" stroke-width="1.1" fill="none"/><path d="M539.5 119 V135" stroke="#000" stroke-width="1" fill="none"/><rect x="539.5" y="120.5" width="7" height="6" stroke="#000" stroke-width="1" fill="none"/><path d="M539.5 130.5 L545.5 127.0 L551.5 130.5 L545.5 134.0 Z" stroke="#000" stroke-width="1" fill="none"/><path d="M581.5 119 V135" stroke="#000" stroke-width="1" fill="none"/><rect x="574.5" y="120.5" width="7" height="6" stroke="#000" stroke-width="1" fill="none"/><path d="M569.5 130.5 L575.5 127.0 L581.5 130.5 L575.5 134.0 Z" stroke="#000" stroke-width="1" fill="none"/><path d="M600 120.5 H615.5" stroke="#000" stroke-width="1" fill="none"/><rect x="601.5" y="120.5" width="5" height="9" stroke="#000" stroke-width="1" fill="none"/><path d="M607.5 127.0 L611.0 120.5 L614.5 127.0 L611.0 133.5 Z" stroke="#000" stroke-width="1" fill="none"/><path d="M630 134.5 H646" stroke="#000" stroke-width="1" fill="none"/><rect x="631.5" y="124.5" width="5" height="10" stroke="#000" stroke-width="1" fill="none"/><path d="M638.0 128.0 L641.5 121.5 L645.0 128.0 L641.5 134.5 Z" stroke="#000" stroke-width="1" fill="none"/><path d="M661 127.5 H677" stroke="#000" stroke-width="1" fill="none"/><rect x="662.5" y="123.5" width="5" height="8" stroke="#000" stroke-width="1" fill="none"/><path d="M668.5 127.5 L672.0 121.0 L675.5 127.5 L672.0 134.0 Z" stroke="#000" stroke-width="1" fill="none"/><path d="M699.5 119 V135" stroke="#000" stroke-width="1" fill="none"/><rect x="696" y="120.5" width="7" height="6" stroke="#000" stroke-width="1" fill="none"/><path d="M693.5 130.5 L699.5 127.0 L705.5 130.5 L699.5 134.0 Z" stroke="#000" stroke-width="1" fill="none"/><path d="M729.5 123.5 H732.5 V131.5 H729.5 M744.5 123.5 H741.5 V131.5 H744.5 M732.5 127.5 H741.5" stroke="#000" stroke-width="1" fill="none"/><path d="M733 127.5 l2 -1.5 v3 z M741 127.5 l-2 -1.5 v3 z" fill="#000"/><path d="M764.5 119.5 V122.5 H773.5 V119.5 M764.5 134.5 V131.5 H773.5 V134.5 M769 122.5 V131.5" stroke="#000" stroke-width="1" fill="none"/><path d="M769 123 l-1.5 2 h3 z M769 131 l-1.5 -2 h3 z" fill="#000"/><rect x="791.5" y="123.5" width="15" height="8" stroke="#000" stroke-width="1" fill="none"/><path d="M794 127.5 H804" stroke="#000" stroke-width="1" fill="none"/><path d="M792 127.5 l2 -1.5 v3 z M806 127.5 l-2 -1.5 v3 z" fill="#000"/><rect x="791.5" y="123.5" width="15" height="8" stroke="#000" stroke-width="1.5" fill="none"/><rect x="825.5" y="120.5" width="8" height="13" stroke="#000" stroke-width="1" fill="none"/><path d="M829.5 122 V132" stroke="#000" stroke-width="1" fill="none"/><path d="M826 121 h1.5 M826 133 h1.5 M832 121 h1.5 M832 133 h1.5" stroke="#000" stroke-width="2"/><rect x="854.5" y="120.5" width="14" height="14" stroke="#000" stroke-width="1" fill="none"/><path d="M861.5 120.5 V134.5 M854.5 127.5 H868.5" stroke="#000" stroke-width="1" fill="none"/><path d="M857 123 l1.5 1.5 M866 123 l-1.5 1.5 M857 132 l1.5 -1.5 M866 132 l-1.5 -1.5" stroke="#000" stroke-width="1" fill="none"/><path d="M890.5 134.5 V120.5 H905.5" stroke="#000" stroke-width="1" fill="none"/><rect x="889" y="119" width="3" height="3" fill="#000"/><path d="M902 132 L894.5 124.5 M894.5 129 V124.5 H899" stroke="#000" stroke-width="1" fill="none"/><path d="M921 120.5 H936.5 V134.5" stroke="#000" stroke-width="1" fill="none"/><rect x="935" y="119" width="3" height="3" fill="#000"/><path d="M924 132 L932.5 123.5 M928 123.5 H932.5 V128" stroke="#000" stroke-width="1" fill="none"/><path d="M952.5 133.5 H967.5 V119" stroke="#000" stroke-width="1" fill="none"/><rect x="966" y="132" width="3" height="3" fill="#000"/><path d="M955 121.5 L963.5 130 M963.5 125.5 V130 H959" stroke="#000" stroke-width="1" fill="none"/><path d="M999 133.5 H984.5 V119" stroke="#000" stroke-width="1" fill="none"/><rect x="983" y="132" width="3" height="3" fill="#000"/><path d="M997 121.5 L988.5 130 M988.5 125.5 V130 H993" stroke="#000" stroke-width="1" fill="none"/><rect x="1015.5" y="120.5" width="13" height="13" stroke="#000" stroke-width="1" fill="none"/><path d="M1022.5 119 V135.5 M1014 127.5 H1030" stroke="#000" stroke-width="1" fill="none"/><rect x="1021" y="126" width="3" height="3" fill="#000"/><path d="M1026 123.5 L1023 126.5" stroke="#000" stroke-width="1" fill="none"/><path d="M1051.5 120.5 V135 M1052 127.5 H1068" stroke="#000" stroke-width="1" fill="none"/><path d="M1055.5 125 L1052.5 127.5 L1055.5 130" stroke="#000" stroke-width="1" fill="none"/><path d="M1098.5 120.5 V135 M1081 127.5 H1098" stroke="#000" stroke-width="1" fill="none"/><path d="M1094.5 125 L1097.5 127.5 L1094.5 130" stroke="#000" stroke-width="1" fill="none"/><path d="M1115.5 118.5 H1130.5 M1122.5 119 V135.5" stroke="#000" stroke-width="1" fill="none"/><path d="M1120 122.5 L1122.5 119.5 L1125 122.5" stroke="#000" stroke-width="1" fill="none"/><path d="M1145 135.5 H1160.5 M1152.5 119 V135" stroke="#000" stroke-width="1" fill="none"/><path d="M1150 132 L1152.5 135 L1155 132" stroke="#000" stroke-width="1" fill="none"/></svg><div style="position:absolute;left:360px;top:119px;width:37px;height:18px;background:#f0f0f0;box-sizing:border-box;border:1px solid;border-color:#a0a0a0 #fff #fff #a0a0a0;"><div style="position:absolute;left:0;top:0;right:0;bottom:0;border:1px solid;border-color:#696969 #e3e3e3 #e3e3e3 #696969;box-sizing:border-box;"></div><div class="edt" style="position:absolute;left:6px;top:0;bottom:0;display:flex;align-items:center;font-size:11px;color:#808080;white-space:nowrap;overflow:hidden;right:2px;">0</div></div><div class="pno" style="position:absolute;left:410px;top:124px;white-space:nowrap;font-size:11px;letter-spacing:-0.350px;line-height:13px;color:#a0a0a0;text-shadow:1px 1px 0 #fff;">Process NO:</div><div style="position:absolute;left:471px;top:119px;width:42px;height:18px;background:#f0f0f0;box-sizing:border-box;border:1px solid;border-color:#a0a0a0 #fff #fff #a0a0a0;"><div style="position:absolute;left:0;top:0;right:0;bottom:0;border:1px solid;border-color:#696969 #e3e3e3 #e3e3e3 #696969;box-sizing:border-box;"></div><div class="edt" style="position:absolute;left:6px;top:0;bottom:0;display:flex;align-items:center;font-size:11px;color:#808080;white-space:nowrap;overflow:hidden;right:2px;">9</div></div><div style="position:absolute;left:322px;top:112px;width:1px;height:32px;background:#a0a0a0;"></div><div style="position:absolute;left:323px;top:112px;width:1px;height:32px;background:#fff;"></div><div style="position:absolute;left:521px;top:112px;width:1px;height:32px;background:#a0a0a0;"></div><div style="position:absolute;left:522px;top:112px;width:1px;height:32px;background:#fff;"></div><div style="position:absolute;left:718px;top:112px;width:1px;height:32px;background:#a0a0a0;"></div><div style="position:absolute;left:719px;top:112px;width:1px;height:32px;background:#fff;"></div><div style="position:absolute;left:879px;top:112px;width:1px;height:32px;background:#a0a0a0;"></div><div style="position:absolute;left:880px;top:112px;width:1px;height:32px;background:#fff;"></div><div style="position:absolute;left:1040px;top:112px;width:1px;height:32px;background:#a0a0a0;"></div><div style="position:absolute;left:1041px;top:112px;width:1px;height:32px;background:#fff;"></div><div style="position:absolute;left:1168px;top:112px;width:1px;height:32px;background:#a0a0a0;"></div><div style="position:absolute;left:1169px;top:112px;width:1px;height:32px;background:#fff;"></div><div style="position:absolute;left:1171px;top:118px;width:72px;height:20px;background:#f0f0f0;box-sizing:border-box;border:1px solid;border-color:#a0a0a0 #fff #fff #a0a0a0;"><div style="position:absolute;left:0;top:0;right:0;bottom:0;border:1px solid;border-color:#696969 #e3e3e3 #e3e3e3 #696969;box-sizing:border-box;"></div><div style="position:absolute;left:3px;top:0;bottom:0;display:flex;align-items:center;font-size:11.5px;color:#808080;">In cut</div></div><div style="position:absolute;left:1226px;top:120px;width:15px;height:16px;background:#f0f0f0;border:1px solid;border-color:#fff #696969 #696969 #fff;"></div><svg style="position:absolute;left:1226px;top:120px;" width="15" height="16" viewBox="0 0 15 16"><path d="M4 6.5 H11 L7.5 10 Z" fill="#808080"/></svg><div style="position:absolute;left:1249px;top:118px;width:58px;height:22px;background:#f0f0f0;"><div style="position:absolute;left:0;top:0;right:0;bottom:0;box-sizing:border-box;border:1px solid;border-color:#fff #696969 #696969 #fff;"></div><div style="position:absolute;left:1px;top:1px;right:1px;bottom:1px;box-sizing:border-box;border:1px solid;border-color:#e3e3e3 #a0a0a0 #a0a0a0 #e3e3e3;"></div><div style="position:absolute;left:0;right:0;top:0;bottom:0;display:flex;align-items:center;justify-content:center;padding-bottom:0px;color:#a0a0a0;text-shadow:1px 1px 0 #fff;font-size:11px;">Auto</div></div><div style="position:absolute;left:1308px;top:118px;width:59px;height:22px;background:#f0f0f0;"><div style="position:absolute;left:0;top:0;right:0;bottom:0;box-sizing:border-box;border:1px solid;border-color:#fff #696969 #696969 #fff;"></div><div style="position:absolute;left:1px;top:1px;right:1px;bottom:1px;box-sizing:border-box;border:1px solid;border-color:#e3e3e3 #a0a0a0 #a0a0a0 #e3e3e3;"></div><div style="position:absolute;left:0;right:0;top:0;bottom:0;display:flex;align-items:center;justify-content:center;padding-bottom:0px;color:#a0a0a0;text-shadow:1px 1px 0 #fff;font-size:11px;">Cut In/Out</div></div><div style="position:absolute;left:1368px;top:118px;width:59px;height:22px;background:#f0f0f0;"><div style="position:absolute;left:0;top:0;right:0;bottom:0;box-sizing:border-box;border:1px solid;border-color:#fff #696969 #696969 #fff;"></div><div style="position:absolute;left:1px;top:1px;right:1px;bottom:1px;box-sizing:border-box;border:1px solid;border-color:#e3e3e3 #a0a0a0 #a0a0a0 #e3e3e3;"></div><div style="position:absolute;left:0;right:0;top:0;bottom:0;display:flex;align-items:center;justify-content:center;padding-bottom:0px;color:#000;font-size:11px;">Check</div></div><div style="position:absolute;left:1428px;top:118px;width:59px;height:22px;background:#f0f0f0;"><div style="position:absolute;left:0;top:0;right:0;bottom:0;box-sizing:border-box;border:1px solid;border-color:#fff #696969 #696969 #fff;"></div><div style="position:absolute;left:1px;top:1px;right:1px;bottom:1px;box-sizing:border-box;border:1px solid;border-color:#e3e3e3 #a0a0a0 #a0a0a0 #e3e3e3;"></div><div style="position:absolute;left:0;right:0;top:0;bottom:0;display:flex;align-items:center;justify-content:center;padding-bottom:0px;color:#000;font-size:11px;">Draw</div></div><div style="position:absolute;left:6px;top:149px;width:2px;height:2px;background:#c8c8c8;"></div><div style="position:absolute;left:10px;top:149px;width:2px;height:2px;background:#c8c8c8;"></div><div style="position:absolute;left:14px;top:149px;width:2px;height:2px;background:#c8c8c8;"></div><div style="position:absolute;left:18px;top:149px;width:2px;height:2px;background:#c8c8c8;"></div><div style="position:absolute;left:22px;top:149px;width:2px;height:2px;background:#c8c8c8;"></div><div style="position:absolute;left:1px;top:154px;width:30px;height:29px;background:#fafafa;border:1px solid;border-color:#a0a0a0 #fff #fff #a0a0a0;"></div><svg style="position:absolute;left:0px;top:0px;" width="32" height="600" viewBox="0 0 32 600"><defs><linearGradient id="yel" x1="0" y1="0" x2="1" y2="1"><stop offset="0" stop-color="#ffe860"/><stop offset="0.5" stop-color="#ffd800"/><stop offset="1" stop-color="#f0c000"/></linearGradient><linearGradient id="arw" x1="0" y1="0" x2="1" y2="1"><stop offset="0" stop-color="#ffffff"/><stop offset="1" stop-color="#b4e4bc"/></linearGradient><linearGradient id="nod" x1="0" y1="0" x2="1" y2="1"><stop offset="0" stop-color="#f0f0ff"/><stop offset="1" stop-color="#8890b8"/></linearGradient></defs><path d="M9.5 161.5 L9.5 175.5 L13.5 172 L17 179 L20.5 177 L17 170.5 L22.5 170 Z" fill="url(#arw)" stroke="#208030" stroke-width="1.2" stroke-linejoin="round"/><path d="M5 192 Q14 187.5 24.5 188.5" stroke="#606060" stroke-width="1.2" fill="none"/><path d="M12 190.5 L12.5 206.5 L16.5 203.5 L23.5 200 Z" fill="url(#nod)" stroke="#404048" stroke-width="1"/><rect x="10.0" y="189.0" width="3" height="3" fill="#fff" stroke="#3050d0" stroke-width="1"/><path d="M7.5 241 L22.5 226.5" stroke="#606060" stroke-width="1.3"/><rect x="6.0" y="240.0" width="3" height="3" fill="#fff" stroke="#1880d0" stroke-width="1"/><rect x="21.0" y="225.0" width="3" height="3" fill="#fff" stroke="#1880d0" stroke-width="1"/><path d="M6.5 273.5 L15.5 264.5 L23.5 256.5" stroke="#606060" stroke-width="1.3" fill="none"/><rect x="5.0" y="272.0" width="3" height="3" fill="#fff" stroke="#1880d0" stroke-width="1"/><rect x="14.0" y="263.0" width="3" height="3" fill="#fff" stroke="#1880d0" stroke-width="1"/><rect x="22.0" y="255.0" width="3" height="3" fill="#fff" stroke="#1880d0" stroke-width="1"/><path d="M6 299 L16 291.5 L23.5 302" stroke="#707070" stroke-width="1.6" fill="none"/><path d="M8 288 L16 291.5 L24 296.5" stroke="#707070" stroke-width="1.4" fill="none"/><rect x="4.0" y="298.0" width="3" height="3" fill="#fff" stroke="#1880d0" stroke-width="1"/><rect x="6.0" y="286.0" width="3" height="3" fill="#fff" stroke="#1880d0" stroke-width="1"/><rect x="15.0" y="290.0" width="3" height="3" fill="#fff" stroke="#1880d0" stroke-width="1"/><rect x="23.0" y="295.0" width="3" height="3" fill="#fff" stroke="#1880d0" stroke-width="1"/><rect x="22.0" y="301.0" width="3" height="3" fill="#fff" stroke="#1880d0" stroke-width="1"/><rect x="5.5" y="315.5" width="19" height="18" fill="url(#yel)" stroke="#c8a000" stroke-width="1"/><rect x="4.0" y="314.0" width="3" height="3" fill="#fff" stroke="#3050d0" stroke-width="1"/><rect x="23.0" y="314.0" width="3" height="3" fill="#fff" stroke="#3050d0" stroke-width="1"/><rect x="4.0" y="332.0" width="3" height="3" fill="#fff" stroke="#3050d0" stroke-width="1"/><rect x="23.0" y="332.0" width="3" height="3" fill="#fff" stroke="#3050d0" stroke-width="1"/><ellipse cx="15.5" cy="354.5" rx="10" ry="5.5" fill="url(#yel)" stroke="#c8a000" stroke-width="1"/><rect x="14.0" y="347.5" width="3" height="3" fill="#fff" stroke="#3050d0" stroke-width="1"/><path d="M12.3 378 Q8.8 376.5 8.8 381 V392.2 M6 383.5 H12" stroke="#8a6a00" stroke-width="3.4" fill="none"/><path d="M12.3 378 Q8.8 376.5 8.8 381 V392.2 M6 383.5 H12" stroke="#ffd020" stroke-width="2" fill="none"/><path d="M15 376 H23 M15 392.5 H23 M19 376 V392.5" stroke="#1478b8" stroke-width="2.6"/><path d="M15 376 H23 M15 392.5 H23 M19 376 V392.5" stroke="#30b0f0" stroke-width="1.2"/><path d="M8 415.5 H24 M16 408 V423 M10.5 410 L21.5 421 M21.5 410 L10.5 421" stroke="#202020" stroke-width="1"/><circle cx="16" cy="415.5" r="1.8" fill="#3060ff"/><rect x="4" y="440" width="22" height="21" fill="#b8b8b8"/><path d="M6.5 442.5 L23.5 458.5 M23.5 442.5 L6.5 458.5" stroke="#303030" stroke-width="5"/><path d="M15.5 476 V498" stroke="#202020" stroke-width="1.2"/><path d="M13 479.5 V495.5 H5 Z M18 479.5 V495.5 H26.5 Z" fill="#909090" stroke="#404040" stroke-width="1"/><path d="M5 516 H27" stroke="#202020" stroke-width="1.2"/><path d="M8 513.5 H24.5 V506 Z M8.5 518.5 H24.5 V527 Z" fill="#909090" stroke="#404040" stroke-width="1"/><defs><linearGradient id="cg" x1="0" y1="1" x2="1" y2="0"><stop offset="0" stop-color="#303030"/><stop offset="1" stop-color="#a0a0a0"/></linearGradient></defs><rect x="8" y="537" width="14" height="14" fill="url(#cg)"/><path d="M4.5 537 V556.5 H26" stroke="#202020" stroke-width="1.6" fill="none"/><path d="M4.5 556.5 L10 551" stroke="#202020" stroke-width="1"/><path d="M24 554 L26.5 556.5 L24 559" stroke="#202020" stroke-width="1" fill="none"/><rect x="6.7" y="566.9" width="5" height="5" fill="#e8e8e8" stroke="#282828" stroke-width="1.1"/><rect x="6.7" y="574.2" width="5" height="5" fill="#e8e8e8" stroke="#282828" stroke-width="1.1"/><rect x="6.7" y="581.5" width="5" height="5" fill="#e8e8e8" stroke="#282828" stroke-width="1.1"/><rect x="14.0" y="566.9" width="5" height="5" fill="#e8e8e8" stroke="#282828" stroke-width="1.1"/><rect x="14.0" y="574.2" width="5" height="5" fill="#e8e8e8" stroke="#282828" stroke-width="1.1"/><rect x="14.0" y="581.5" width="5" height="5" fill="#e8e8e8" stroke="#282828" stroke-width="1.1"/><rect x="21.3" y="566.9" width="5" height="5" fill="#e8e8e8" stroke="#282828" stroke-width="1.1"/><rect x="21.3" y="574.2" width="5" height="5" fill="#e8e8e8" stroke="#282828" stroke-width="1.1"/><rect x="21.3" y="581.5" width="5" height="5" fill="#e8e8e8" stroke="#282828" stroke-width="1.1"/></svg><div style="position:absolute;left:2px;top:216px;width:27px;height:1px;background:#a0a0a0;"></div><div style="position:absolute;left:2px;top:217px;width:27px;height:1px;background:#fff;"></div><div style="position:absolute;left:2px;top:431px;width:27px;height:1px;background:#a0a0a0;"></div><div style="position:absolute;left:2px;top:432px;width:27px;height:1px;background:#fff;"></div><div style="position:absolute;left:2px;top:468px;width:27px;height:1px;background:#a0a0a0;"></div><div style="position:absolute;left:2px;top:469px;width:27px;height:1px;background:#fff;"></div><div style="position:absolute;left:0px;top:606px;width:30px;height:1px;background:#a0a0a0;"></div><div style="position:absolute;left:0px;top:607px;width:30px;height:1px;background:#fff;"></div><div style="position:absolute;left:30px;top:145px;width:1px;height:842px;background:#fff;"></div><div style="position:absolute;left:1623px;top:145px;width:1px;height:842px;background:#fff;"></div><div style="position:absolute;left:1628px;top:151px;width:274px;height:1px;background:#fff;"></div><div style="position:absolute;left:1628px;top:152px;width:274px;height:1px;background:#a0a0a0;"></div><div style="position:absolute;left:1628px;top:154px;width:274px;height:1px;background:#fff;"></div><div style="position:absolute;left:1628px;top:155px;width:274px;height:1px;background:#a0a0a0;"></div><div style="position:absolute;left:1901px;top:151px;width:1px;height:5px;background:#a0a0a0;"></div><svg style="position:absolute;left:1905px;top:148px;" width="10" height="10" viewBox="0 0 10 10"><path d="M2.5 2.5 L7.5 7.5 M7.5 2.5 L2.5 7.5" stroke="#000" stroke-width="1.6"/></svg><div style="position:absolute;left:1630px;top:181px;width:287px;height:1px;background:#fff;"></div><div style="position:absolute;left:1675px;top:164px;width:44px;height:17px;background:#f0f0f0;border-left:1px solid #fff;border-top:1px solid #fff;border-right:1px solid #696969;border-radius:2px 2px 0 0;"></div><div style="position:absolute;left:1717px;top:165px;width:1px;height:16px;background:#a0a0a0;"></div><div class="tab" style="position:absolute;left:1679px;top:167px;white-space:nowrap;font-size:11px;letter-spacing:-0.15px;line-height:13px;">Output</div><div style="position:absolute;left:1719px;top:164px;width:42px;height:17px;background:#f0f0f0;border-left:1px solid #fff;border-top:1px solid #fff;border-right:1px solid #696969;border-radius:2px 2px 0 0;"></div><div style="position:absolute;left:1759px;top:165px;width:1px;height:16px;background:#a0a0a0;"></div><div class="tab" style="position:absolute;left:1723px;top:167px;white-space:nowrap;font-size:11px;letter-spacing:-0.15px;line-height:13px;">Doc</div><div style="position:absolute;left:1761px;top:164px;width:42px;height:17px;background:#f0f0f0;border-left:1px solid #fff;border-top:1px solid #fff;border-right:1px solid #696969;border-radius:2px 2px 0 0;"></div><div style="position:absolute;left:1801px;top:165px;width:1px;height:16px;background:#a0a0a0;"></div><div class="tab" style="position:absolute;left:1765px;top:167px;white-space:nowrap;font-size:11px;letter-spacing:-0.15px;line-height:13px;">User</div><div style="position:absolute;left:1803px;top:164px;width:42px;height:17px;background:#f0f0f0;border-left:1px solid #fff;border-top:1px solid #fff;border-right:1px solid #696969;border-radius:2px 2px 0 0;"></div><div style="position:absolute;left:1843px;top:165px;width:1px;height:16px;background:#a0a0a0;"></div><div class="tab" style="position:absolute;left:1807px;top:167px;white-space:nowrap;font-size:11px;letter-spacing:-0.15px;line-height:13px;">Test</div><div style="position:absolute;left:1630px;top:162px;width:45px;height:20px;background:#f0f0f0;border-left:1px solid #fff;border-top:1px solid #fff;border-right:1px solid #696969;border-radius:2px 2px 0 0;"></div><div style="position:absolute;left:1673px;top:163px;width:1px;height:19px;background:#a0a0a0;"></div><div class="tab" style="position:absolute;left:1636.5px;top:165px;white-space:nowrap;font-size:11px;letter-spacing:-0.15px;line-height:13px;">Work</div><div style="position:absolute;left:1633px;top:184px;width:272px;height:118px;background:#fff;border:1px solid;border-color:#a0a0a0 #fff #fff #a0a0a0;"></div><div style="position:absolute;left:1634px;top:185px;width:270px;height:116px;border:1px solid;border-color:#696969 #e3e3e3 #e3e3e3 #696969;"></div><div style="position:absolute;left:1635px;top:186px;width:50px;height:17px;background:#f0f0f0;border:1px solid;border-color:#fff #696969 #696969 #fff;"><div style="position:absolute;left:0;right:0;top:0;bottom:0;display:flex;align-items:center;justify-content:flex-start;font-size:11px;letter-spacing:-0.15px;padding-left:4px;">Layer</div></div><div style="position:absolute;left:1636px;top:187px;width:48px;height:15px;border:1px solid;border-color:#f0f0f0 #a0a0a0 #a0a0a0 #f0f0f0;"></div><div style="position:absolute;left:1685px;top:186px;width:125px;height:17px;background:#f0f0f0;border:1px solid;border-color:#fff #696969 #696969 #fff;"><div style="position:absolute;left:0;right:0;top:0;bottom:0;display:flex;align-items:center;justify-content:center;font-size:11px;letter-spacing:-0.15px;padding-left:0px;">Mode</div></div><div style="position:absolute;left:1686px;top:187px;width:123px;height:15px;border:1px solid;border-color:#f0f0f0 #a0a0a0 #a0a0a0 #f0f0f0;"></div><div style="position:absolute;left:1810px;top:186px;width:50px;height:17px;background:#f0f0f0;border:1px solid;border-color:#fff #696969 #696969 #fff;"><div style="position:absolute;left:0;right:0;top:0;bottom:0;display:flex;align-items:center;justify-content:center;font-size:11px;letter-spacing:-0.15px;padding-left:0px;">Output</div></div><div style="position:absolute;left:1811px;top:187px;width:48px;height:15px;border:1px solid;border-color:#f0f0f0 #a0a0a0 #a0a0a0 #f0f0f0;"></div><div style="position:absolute;left:1860px;top:186px;width:44px;height:17px;background:#f0f0f0;border:1px solid;border-color:#fff #696969 #696969 #fff;"><div style="position:absolute;left:0;right:0;top:0;bottom:0;display:flex;align-items:center;justify-content:center;font-size:11px;letter-spacing:-0.15px;padding-left:0px;">Hide</div></div><div style="position:absolute;left:1861px;top:187px;width:42px;height:15px;border:1px solid;border-color:#f0f0f0 #a0a0a0 #a0a0a0 #f0f0f0;"></div><div style="position:absolute;left:1635px;top:218px;width:269px;height:1px;background:#ececec;"></div><div style="position:absolute;left:1635px;top:232px;width:269px;height:1px;background:#ececec;"></div><div style="position:absolute;left:1635px;top:246px;width:269px;height:1px;background:#ececec;"></div><div style="position:absolute;left:1635px;top:260px;width:269px;height:1px;background:#ececec;"></div><div style="position:absolute;left:1635px;top:274px;width:269px;height:1px;background:#ececec;"></div><div style="position:absolute;left:1685px;top:203px;width:1px;height:82px;background:#ececec;"></div><div style="position:absolute;left:1810px;top:203px;width:1px;height:82px;background:#ececec;"></div><div style="position:absolute;left:1860px;top:203px;width:1px;height:82px;background:#ececec;"></div><div style="position:absolute;left:1635px;top:205px;width:49px;height:13px;background:#000;"></div><div style="position:absolute;left:1686px;top:205px;width:124px;height:13px;display:flex;align-items:center;justify-content:center;font-size:12px;color:#000;">Laser Cut</div><div style="position:absolute;left:1811px;top:205px;width:49px;height:13px;display:flex;align-items:center;justify-content:center;font-size:12px;color:#000;">Yes</div><div style="position:absolute;left:1861px;top:205px;width:43px;height:13px;display:flex;align-items:center;justify-content:center;font-size:12px;color:#000;">No</div><div style="position:absolute;left:1635px;top:219px;width:49px;height:13px;background:#0000ff;"></div><div style="position:absolute;left:1686px;top:219px;width:124px;height:13px;background:#0000c8;"></div><div style="position:absolute;left:1811px;top:219px;width:49px;height:13px;background:#0000c8;"></div><div style="position:absolute;left:1861px;top:219px;width:43px;height:13px;background:#0000c8;"></div><div style="position:absolute;left:1635px;top:219px;width:50px;height:13px;display:flex;align-items:center;justify-content:center;font-size:12px;color:#fff;">BMP</div><div style="position:absolute;left:1686px;top:219px;width:124px;height:13px;display:flex;align-items:center;justify-content:center;font-size:12px;color:#fff;">Laser Scan</div><div style="position:absolute;left:1811px;top:219px;width:49px;height:13px;display:flex;align-items:center;justify-content:center;font-size:12px;color:#fff;">Yes</div><div style="position:absolute;left:1861px;top:219px;width:43px;height:13px;display:flex;align-items:center;justify-content:center;font-size:12px;color:#fff;">No</div><div style="position:absolute;left:1635px;top:285px;width:269px;height:16px;background:#f0f0f0;"></div><div style="position:absolute;left:1652px;top:286px;width:230px;height:14px;background:#cdcdcd;"></div><svg style="position:absolute;left:1635px;top:285px;" width="16" height="16" viewBox="0 0 16 16"><path d="M10 4 L6 8 L10 12" fill="none" stroke="#505050" stroke-width="1.8"/></svg><svg style="position:absolute;left:1888px;top:285px;" width="16" height="16" viewBox="0 0 16 16"><path d="M6 4 L10 8 L6 12" fill="none" stroke="#505050" stroke-width="1.8"/></svg><div style="position:absolute;left:1633px;top:306px;width:272px;height:145px;background:#fff;border:1px solid;border-color:#a0a0a0 #fff #fff #a0a0a0;"></div><div style="position:absolute;left:1634px;top:307px;width:270px;height:143px;border:1px solid;border-color:#696969 #e3e3e3 #e3e3e3 #696969;"></div><div style="position:absolute;left:1635px;top:308px;width:132px;height:19px;background:#dcdcdc;"></div><div class="prop" style="position:absolute;left:1637px;top:311px;white-space:nowrap;font-size:11px;letter-spacing:-0.15px;line-height:13px;">Color</div><div style="position:absolute;left:1768px;top:327px;width:136px;height:1px;background:#e0e0e0;"></div><div style="position:absolute;left:1771px;top:310px;width:131px;height:15px;background:#0000ff;border:1px solid #000;"></div><div style="position:absolute;left:1635px;top:328px;width:132px;height:19px;background:#dcdcdc;"></div><div class="prop" style="position:absolute;left:1637px;top:331px;white-space:nowrap;font-size:11px;letter-spacing:-0.15px;line-height:13px;">Speed(mm/s)</div><div style="position:absolute;left:1768px;top:347px;width:136px;height:1px;background:#e0e0e0;"></div><div class="propv" style="position:absolute;left:1772px;top:332px;white-space:nowrap;font-size:11px;letter-spacing:-0.15px;line-height:13px;">100.00</div><div style="position:absolute;left:1635px;top:348px;width:132px;height:19px;background:#dcdcdc;"></div><div class="prop" style="position:absolute;left:1637px;top:351px;white-space:nowrap;font-size:11px;letter-spacing:-0.15px;line-height:13px;">MinPower(%)-1</div><div style="position:absolute;left:1768px;top:367px;width:136px;height:1px;background:#e0e0e0;"></div><div class="propv" style="position:absolute;left:1772px;top:352px;white-space:nowrap;font-size:11px;letter-spacing:-0.15px;line-height:13px;">30.0</div><div style="position:absolute;left:1635px;top:368px;width:132px;height:19px;background:#dcdcdc;"></div><div class="prop" style="position:absolute;left:1637px;top:371px;white-space:nowrap;font-size:11px;letter-spacing:-0.15px;line-height:13px;">MaxPower(%)-1</div><div style="position:absolute;left:1768px;top:387px;width:136px;height:1px;background:#e0e0e0;"></div><div class="propv" style="position:absolute;left:1772px;top:372px;white-space:nowrap;font-size:11px;letter-spacing:-0.15px;line-height:13px;">30.0</div><div style="position:absolute;left:1635px;top:388px;width:132px;height:19px;background:#dcdcdc;"></div><div class="prop" style="position:absolute;left:1637px;top:391px;white-space:nowrap;font-size:11px;letter-spacing:-0.15px;line-height:13px;">Priority</div><div style="position:absolute;left:1768px;top:407px;width:136px;height:1px;background:#e0e0e0;"></div><div class="propv" style="position:absolute;left:1772px;top:392px;white-space:nowrap;font-size:11px;letter-spacing:-0.15px;line-height:13px;">2</div><div style="position:absolute;left:1635px;top:454px;width:40px;height:18px;background:#f0f0f0;"><div style="position:absolute;left:0;top:0;right:0;bottom:0;box-sizing:border-box;border:1px solid;border-color:#fff #696969 #696969 #fff;"></div><div style="position:absolute;left:1px;top:1px;right:1px;bottom:1px;box-sizing:border-box;border:1px solid;border-color:#e3e3e3 #a0a0a0 #a0a0a0 #e3e3e3;"></div><div style="position:absolute;left:0;right:0;top:0;bottom:0;display:flex;align-items:center;justify-content:center;padding-bottom:0px;color:#000;font-size:11px;letter-spacing:-0.15px;">Laser1</div></div><div style="position:absolute;left:1675px;top:454px;width:44px;height:18px;background:#f0f0f0;"><div style="position:absolute;left:0;top:0;right:0;bottom:0;box-sizing:border-box;border:1px solid;border-color:#fff #696969 #696969 #fff;"></div><div style="position:absolute;left:1px;top:1px;right:1px;bottom:1px;box-sizing:border-box;border:1px solid;border-color:#e3e3e3 #a0a0a0 #a0a0a0 #e3e3e3;"></div><div style="position:absolute;left:0;right:0;top:0;bottom:0;display:flex;align-items:center;justify-content:center;padding-bottom:0px;color:#000;font-size:11px;letter-spacing:-0.15px;">Laser2</div></div><div style="position:absolute;left:1634px;top:487px;width:275px;height:100px;border:1px solid #fff;"></div><div style="position:absolute;left:1633px;top:486px;width:275px;height:100px;border:1px solid #a0a0a0;"></div><div class="grp" style="position:absolute;left:1639px;top:480px;white-space:nowrap;font-size:11px;letter-spacing:-0.15px;line-height:13px;background:#f0f0f0;padding:0 2px;">Line/column setup</div><div style="position:absolute;left:1641.5px;top:495px;width:60px;text-align:center;font-size:11px;letter-spacing:-0.15px;line-height:13px;">Num</div><div style="position:absolute;left:1684.5px;top:495px;width:60px;text-align:center;font-size:11px;letter-spacing:-0.15px;line-height:13px;">space1</div><div style="position:absolute;left:1734.5px;top:495px;width:60px;text-align:center;font-size:11px;letter-spacing:-0.15px;line-height:13px;">space2</div><div style="position:absolute;left:1840px;top:495px;width:60px;text-align:center;font-size:11px;letter-spacing:-0.15px;line-height:13px;">Mirror</div><div style="position:absolute;left:1790px;top:495px;width:48px;overflow:hidden;font-size:11px;letter-spacing:-0.35px;line-height:13px;"><div style="margin-left:-4px;white-space:nowrap;">Dislocation</div></div><div style="position:absolute;left:1641px;top:516px;white-space:nowrap;font-size:11px;letter-spacing:-0.15px;line-height:13px;">X:</div><div style="position:absolute;left:1641px;top:536px;white-space:nowrap;font-size:11px;letter-spacing:-0.15px;line-height:13px;">Y:</div><div style="position:absolute;left:1655px;top:511px;width:34px;height:18px;background:#f0f0f0;box-sizing:border-box;border:1px solid;border-color:#a0a0a0 #fff #fff #a0a0a0;"><div style="position:absolute;left:0;top:0;right:0;bottom:0;border:1px solid;border-color:#696969 #e3e3e3 #e3e3e3 #696969;box-sizing:border-box;"></div><div class="edt" style="position:absolute;left:6px;top:0;bottom:0;display:flex;align-items:center;font-size:11px;color:#808080;white-space:nowrap;overflow:hidden;right:2px;">1</div></div><div style="position:absolute;left:1691px;top:511px;width:47px;height:18px;background:#f0f0f0;box-sizing:border-box;border:1px solid;border-color:#a0a0a0 #fff #fff #a0a0a0;"><div style="position:absolute;left:0;top:0;right:0;bottom:0;border:1px solid;border-color:#696969 #e3e3e3 #e3e3e3 #696969;box-sizing:border-box;"></div><div class="edt" style="position:absolute;left:5px;top:0;bottom:0;display:flex;align-items:center;font-size:11px;color:#808080;white-space:nowrap;overflow:hidden;right:2px;">0.000</div></div><div style="position:absolute;left:1741px;top:511px;width:47px;height:18px;background:#f0f0f0;box-sizing:border-box;border:1px solid;border-color:#a0a0a0 #fff #fff #a0a0a0;"><div style="position:absolute;left:0;top:0;right:0;bottom:0;border:1px solid;border-color:#696969 #e3e3e3 #e3e3e3 #696969;box-sizing:border-box;"></div><div class="edt" style="position:absolute;left:5px;top:0;bottom:0;display:flex;align-items:center;font-size:11px;color:#808080;white-space:nowrap;overflow:hidden;right:2px;">0.000</div></div><div style="position:absolute;left:1790px;top:511px;width:47px;height:18px;background:#f0f0f0;box-sizing:border-box;border:1px solid;border-color:#a0a0a0 #fff #fff #a0a0a0;"><div style="position:absolute;left:0;top:0;right:0;bottom:0;border:1px solid;border-color:#696969 #e3e3e3 #e3e3e3 #696969;box-sizing:border-box;"></div><div class="edt" style="position:absolute;left:5px;top:0;bottom:0;display:flex;align-items:center;font-size:11px;color:#808080;white-space:nowrap;overflow:hidden;right:2px;">0.000</div></div><div style="position:absolute;left:1655px;top:532px;width:34px;height:18px;background:#f0f0f0;box-sizing:border-box;border:1px solid;border-color:#a0a0a0 #fff #fff #a0a0a0;"><div style="position:absolute;left:0;top:0;right:0;bottom:0;border:1px solid;border-color:#696969 #e3e3e3 #e3e3e3 #696969;box-sizing:border-box;"></div><div class="edt" style="position:absolute;left:6px;top:0;bottom:0;display:flex;align-items:center;font-size:11px;color:#808080;white-space:nowrap;overflow:hidden;right:2px;">1</div></div><div style="position:absolute;left:1691px;top:532px;width:47px;height:18px;background:#f0f0f0;box-sizing:border-box;border:1px solid;border-color:#a0a0a0 #fff #fff #a0a0a0;"><div style="position:absolute;left:0;top:0;right:0;bottom:0;border:1px solid;border-color:#696969 #e3e3e3 #e3e3e3 #696969;box-sizing:border-box;"></div><div class="edt" style="position:absolute;left:5px;top:0;bottom:0;display:flex;align-items:center;font-size:11px;color:#808080;white-space:nowrap;overflow:hidden;right:2px;">0.000</div></div><div style="position:absolute;left:1741px;top:532px;width:47px;height:18px;background:#f0f0f0;box-sizing:border-box;border:1px solid;border-color:#a0a0a0 #fff #fff #a0a0a0;"><div style="position:absolute;left:0;top:0;right:0;bottom:0;border:1px solid;border-color:#696969 #e3e3e3 #e3e3e3 #696969;box-sizing:border-box;"></div><div class="edt" style="position:absolute;left:5px;top:0;bottom:0;display:flex;align-items:center;font-size:11px;color:#808080;white-space:nowrap;overflow:hidden;right:2px;">0.000</div></div><div style="position:absolute;left:1790px;top:532px;width:47px;height:18px;background:#f0f0f0;box-sizing:border-box;border:1px solid;border-color:#a0a0a0 #fff #fff #a0a0a0;"><div style="position:absolute;left:0;top:0;right:0;bottom:0;border:1px solid;border-color:#696969 #e3e3e3 #e3e3e3 #696969;box-sizing:border-box;"></div><div class="edt" style="position:absolute;left:5px;top:0;bottom:0;display:flex;align-items:center;font-size:11px;color:#808080;white-space:nowrap;overflow:hidden;right:2px;">0.000</div></div><div style="position:absolute;left:1840px;top:510px;width:63px;height:42px;border:1px solid #808080;"></div><div style="position:absolute;left:1844px;top:515px;width:12px;height:12px;background:#f0f0f0;border:1px solid;border-color:#a0a0a0 #fff #fff #a0a0a0;"></div><div style="position:absolute;left:1845px;top:516px;width:10px;height:10px;border:1px solid;border-color:#696969 #e3e3e3 #e3e3e3 #696969;"></div><div style="position:absolute;left:1861px;top:516px;white-space:nowrap;font-size:11px;letter-spacing:-0.15px;line-height:13px;color:#a0a0a0;text-shadow:1px 1px 0 #fff;">H</div><div style="position:absolute;left:1873px;top:515px;width:12px;height:12px;background:#f0f0f0;border:1px solid;border-color:#a0a0a0 #fff #fff #a0a0a0;"></div><div style="position:absolute;left:1874px;top:516px;width:10px;height:10px;border:1px solid;border-color:#696969 #e3e3e3 #e3e3e3 #696969;"></div><div style="position:absolute;left:1890px;top:516px;white-space:nowrap;font-size:11px;letter-spacing:-0.15px;line-height:13px;color:#a0a0a0;text-shadow:1px 1px 0 #fff;">V</div><div style="position:absolute;left:1844px;top:534px;width:12px;height:12px;background:#f0f0f0;border:1px solid;border-color:#a0a0a0 #fff #fff #a0a0a0;"></div><div style="position:absolute;left:1845px;top:535px;width:10px;height:10px;border:1px solid;border-color:#696969 #e3e3e3 #e3e3e3 #696969;"></div><div style="position:absolute;left:1861px;top:535px;white-space:nowrap;font-size:11px;letter-spacing:-0.15px;line-height:13px;color:#a0a0a0;text-shadow:1px 1px 0 #fff;">H</div><div style="position:absolute;left:1873px;top:534px;width:12px;height:12px;background:#f0f0f0;border:1px solid;border-color:#a0a0a0 #fff #fff #a0a0a0;"></div><div style="position:absolute;left:1874px;top:535px;width:10px;height:10px;border:1px solid;border-color:#696969 #e3e3e3 #e3e3e3 #696969;"></div><div style="position:absolute;left:1890px;top:535px;white-space:nowrap;font-size:11px;letter-spacing:-0.15px;line-height:13px;color:#a0a0a0;text-shadow:1px 1px 0 #fff;">V</div><div style="position:absolute;left:1636px;top:552px;width:30px;height:31px;background:#f0f0f0;border:1px solid #000;"></div><div style="position:absolute;left:1637px;top:553px;width:28px;height:29px;border:1px solid;border-color:#fff #696969 #696969 #fff;"></div><div style="position:absolute;left:1638px;top:554px;width:26px;height:27px;border:1px solid;border-color:#e3e3e3 #000 #000 #e3e3e3;"></div><svg style="position:absolute;left:1636px;top:552px;" width="31" height="32" viewBox="0 0 31 32"><path d="M7.5 27 V7.5 H23" stroke="#000" stroke-width="1" fill="none"/><path d="M21 5.5 L23.5 7.5 L21 9.5 M5.5 24.5 L7.5 27 L9.5 24.5" stroke="#000" stroke-width="1" fill="none"/><rect x="6" y="6" width="3" height="3" fill="#0000ff"/><rect x="12.5" y="12.5" width="4" height="4" fill="#00e0e0" stroke="#000" stroke-width="1"/><rect x="12.5" y="18.5" width="4" height="4" fill="#00e0e0" stroke="#000" stroke-width="1"/><rect x="18.5" y="12.5" width="4" height="4" fill="#00e0e0" stroke="#000" stroke-width="1"/><rect x="18.5" y="18.5" width="4" height="4" fill="#00e0e0" stroke="#000" stroke-width="1"/></svg><div style="position:absolute;left:1668px;top:556px;width:74px;height:24px;background:#f0f0f0;"><div style="position:absolute;left:0;top:0;right:0;bottom:0;box-sizing:border-box;border:1px solid;border-color:#fff #696969 #696969 #fff;"></div><div style="position:absolute;left:1px;top:1px;right:1px;bottom:1px;box-sizing:border-box;border:1px solid;border-color:#e3e3e3 #a0a0a0 #a0a0a0 #e3e3e3;"></div><div style="position:absolute;left:0;right:0;top:0;bottom:0;display:flex;align-items:center;justify-content:center;padding-bottom:0px;color:#a0a0a0;text-shadow:1px 1px 0 #fff;font-size:11px;letter-spacing:-0.15px;">Virtual array</div></div><div style="position:absolute;left:1744px;top:556px;width:68px;height:24px;background:#f0f0f0;"><div style="position:absolute;left:0;top:0;right:0;bottom:0;box-sizing:border-box;border:1px solid;border-color:#fff #696969 #696969 #fff;"></div><div style="position:absolute;left:1px;top:1px;right:1px;bottom:1px;box-sizing:border-box;border:1px solid;border-color:#e3e3e3 #a0a0a0 #a0a0a0 #e3e3e3;"></div><div style="position:absolute;left:0;right:0;top:0;bottom:0;display:flex;align-items:center;justify-content:center;padding-bottom:0px;color:#a0a0a0;text-shadow:1px 1px 0 #fff;font-size:11px;letter-spacing:-0.15px;">Bestrew...</div></div><div style="position:absolute;left:1814px;top:556px;width:55px;height:24px;background:#f0f0f0;"><div style="position:absolute;left:0;top:0;right:0;bottom:0;box-sizing:border-box;border:1px solid;border-color:#fff #696969 #696969 #fff;"></div><div style="position:absolute;left:1px;top:1px;right:1px;bottom:1px;box-sizing:border-box;border:1px solid;border-color:#e3e3e3 #a0a0a0 #a0a0a0 #e3e3e3;"></div><div style="position:absolute;left:0;right:0;top:0;bottom:0;display:flex;align-items:center;justify-content:center;padding-bottom:0px;color:#a0a0a0;text-shadow:1px 1px 0 #fff;font-size:11px;letter-spacing:-0.15px;">Nesting</div></div><div style="position:absolute;left:1871px;top:556px;width:31px;height:24px;background:#f0f0f0;"><div style="position:absolute;left:0;top:0;right:0;bottom:0;box-sizing:border-box;border:1px solid;border-color:#fff #696969 #696969 #fff;"></div><div style="position:absolute;left:1px;top:1px;right:1px;bottom:1px;box-sizing:border-box;border:1px solid;border-color:#e3e3e3 #a0a0a0 #a0a0a0 #e3e3e3;"></div><div style="position:absolute;left:0;right:0;top:0;bottom:0;display:flex;align-items:center;justify-content:center;padding-bottom:0px;color:#000;font-size:11px;letter-spacing:-0.15px;">...</div></div><div style="position:absolute;left:1629px;top:596px;width:288px;height:1px;background:#808080;"></div><div style="position:absolute;left:1629px;top:597px;width:288px;height:1px;background:#fff;"></div><div style="position:absolute;left:1624px;top:744px;width:296px;height:1px;background:#a0a0a0;"></div><div style="position:absolute;left:1624px;top:745px;width:296px;height:1px;background:#fff;"></div><div style="position:absolute;left:1628px;top:751px;width:274px;height:1px;background:#fff;"></div><div style="position:absolute;left:1628px;top:752px;width:274px;height:1px;background:#a0a0a0;"></div><div style="position:absolute;left:1628px;top:754px;width:274px;height:1px;background:#fff;"></div><div style="position:absolute;left:1628px;top:755px;width:274px;height:1px;background:#a0a0a0;"></div><div style="position:absolute;left:1901px;top:751px;width:1px;height:5px;background:#a0a0a0;"></div><svg style="position:absolute;left:1906px;top:748px;" width="10" height="10" viewBox="0 0 10 10"><path d="M2.5 2.5 L7.5 7.5 M7.5 2.5 L2.5 7.5" stroke="#000" stroke-width="1.6"/></svg><div style="position:absolute;left:1631px;top:769px;width:286px;height:145px;border:1px solid #fff;"></div><div style="position:absolute;left:1630px;top:768px;width:286px;height:145px;border:1px solid #a0a0a0;"></div><div class="grp" style="position:absolute;left:1636px;top:762px;white-space:nowrap;font-size:11px;letter-spacing:-0.15px;line-height:13px;background:#f0f0f0;padding:0 2px;">Laser work</div><div style="position:absolute;left:1639px;top:778px;width:92px;height:21px;background:#f0f0f0;"><div style="position:absolute;left:0;top:0;right:0;bottom:0;box-sizing:border-box;border:1px solid;border-color:#fff #696969 #696969 #fff;"></div><div style="position:absolute;left:1px;top:1px;right:1px;bottom:1px;box-sizing:border-box;border:1px solid;border-color:#e3e3e3 #a0a0a0 #a0a0a0 #e3e3e3;"></div><div style="position:absolute;left:0;right:0;top:0;bottom:0;display:flex;align-items:center;justify-content:center;padding-bottom:2px;color:#000;font-size:11px;letter-spacing:-0.15px;">Start</div></div><div style="position:absolute;left:1732px;top:778px;width:101px;height:21px;background:#f0f0f0;"><div style="position:absolute;left:0;top:0;right:0;bottom:0;box-sizing:border-box;border:1px solid;border-color:#fff #696969 #696969 #fff;"></div><div style="position:absolute;left:1px;top:1px;right:1px;bottom:1px;box-sizing:border-box;border:1px solid;border-color:#e3e3e3 #a0a0a0 #a0a0a0 #e3e3e3;"></div><div style="position:absolute;left:0;right:0;top:0;bottom:0;display:flex;align-items:center;justify-content:center;padding-bottom:2px;color:#000;font-size:11px;letter-spacing:-0.15px;">Pause/Continue</div></div><div style="position:absolute;left:1834px;top:778px;width:72px;height:21px;background:#f0f0f0;"><div style="position:absolute;left:0;top:0;right:0;bottom:0;box-sizing:border-box;border:1px solid;border-color:#fff #696969 #696969 #fff;"></div><div style="position:absolute;left:1px;top:1px;right:1px;bottom:1px;box-sizing:border-box;border:1px solid;border-color:#e3e3e3 #a0a0a0 #a0a0a0 #e3e3e3;"></div><div style="position:absolute;left:0;right:0;top:0;bottom:0;display:flex;align-items:center;justify-content:center;padding-bottom:2px;color:#000;font-size:11px;letter-spacing:-0.15px;">Stop</div></div><div style="position:absolute;left:1639px;top:803px;width:92px;height:21px;background:#f0f0f0;"><div style="position:absolute;left:0;top:0;right:0;bottom:0;box-sizing:border-box;border:1px solid;border-color:#fff #696969 #696969 #fff;"></div><div style="position:absolute;left:1px;top:1px;right:1px;bottom:1px;box-sizing:border-box;border:1px solid;border-color:#e3e3e3 #a0a0a0 #a0a0a0 #e3e3e3;"></div><div style="position:absolute;left:0;right:0;top:0;bottom:0;display:flex;align-items:center;justify-content:center;padding-bottom:2px;color:#000;font-size:11px;letter-spacing:-0.15px;">SaveToUFile</div></div><div style="position:absolute;left:1732px;top:803px;width:101px;height:21px;background:#f0f0f0;"><div style="position:absolute;left:0;top:0;right:0;bottom:0;box-sizing:border-box;border:1px solid;border-color:#fff #696969 #696969 #fff;"></div><div style="position:absolute;left:1px;top:1px;right:1px;bottom:1px;box-sizing:border-box;border:1px solid;border-color:#e3e3e3 #a0a0a0 #a0a0a0 #e3e3e3;"></div><div style="position:absolute;left:0;right:0;top:0;bottom:0;display:flex;align-items:center;justify-content:center;padding-bottom:2px;color:#000;font-size:11px;letter-spacing:-0.15px;">UFileOutput</div></div><div style="position:absolute;left:1834px;top:803px;width:72px;height:21px;background:#000;"></div><div style="position:absolute;left:1835px;top:804px;width:70px;height:19px;background:#f0f0f0;"><div style="position:absolute;left:0;top:0;right:0;bottom:0;box-sizing:border-box;border:1px solid;border-color:#fff #696969 #696969 #fff;"></div><div style="position:absolute;left:1px;top:1px;right:1px;bottom:1px;box-sizing:border-box;border:1px solid;border-color:#e3e3e3 #a0a0a0 #a0a0a0 #e3e3e3;"></div><div style="position:absolute;left:0;right:0;top:0;bottom:0;display:flex;align-items:center;justify-content:center;padding-bottom:2px;color:#000;font-size:11px;letter-spacing:-0.15px;">Download</div></div><div style="position:absolute;left:1650px;top:837px;width:80px;text-align:right;font-size:11px;letter-spacing:-0.15px;line-height:13px;">Position:</div><div style="position:absolute;left:1735px;top:830px;width:171px;height:20px;background:#fff;box-sizing:border-box;border:1px solid;border-color:#a0a0a0 #fff #fff #a0a0a0;"><div style="position:absolute;left:0;top:0;right:0;bottom:0;border:1px solid;border-color:#696969 #e3e3e3 #e3e3e3 #696969;box-sizing:border-box;"></div><div style="position:absolute;left:3px;top:0;bottom:1px;display:flex;align-items:center;font-size:11px;letter-spacing:-0.15px;">Current position</div></div><div style="position:absolute;left:1888px;top:832px;width:16px;height:16px;background:#f0f0f0;border:1px solid;border-color:#fff #696969 #696969 #fff;"></div><svg style="position:absolute;left:1888px;top:832px;" width="16" height="16" viewBox="0 0 16 16"><path d="M3.5 6 h9 l-4.5 4.5 z" fill="#000"/></svg><div style="position:absolute;left:1639px;top:861px;width:13px;height:13px;background:#fff;border:1px solid;border-color:#a0a0a0 #fff #fff #a0a0a0;"></div><div style="position:absolute;left:1640px;top:862px;width:11px;height:11px;border:1px solid;border-color:#696969 #e3e3e3 #e3e3e3 #696969;"></div><svg style="position:absolute;left:1639px;top:861px;" width="13" height="13" viewBox="0 0 13 13"><path d="M3 6 L5.5 8.5 L10 3.5" stroke="#000" stroke-width="1.8" fill="none"/></svg><div style="position:absolute;left:1656px;top:862px;white-space:nowrap;font-size:11px;letter-spacing:-0.15px;line-height:13px;">Path optimize</div><div style="position:absolute;left:1639px;top:876px;width:13px;height:13px;background:#fff;border:1px solid;border-color:#a0a0a0 #fff #fff #a0a0a0;"></div><div style="position:absolute;left:1640px;top:877px;width:11px;height:11px;border:1px solid;border-color:#696969 #e3e3e3 #e3e3e3 #696969;"></div><div style="position:absolute;left:1656px;top:877px;white-space:nowrap;font-size:11px;letter-spacing:-0.15px;line-height:13px;">Output select graphics</div><div style="position:absolute;left:1656px;top:894px;width:13px;height:13px;background:#f0f0f0;border:1px solid;border-color:#a0a0a0 #fff #fff #a0a0a0;"></div><div style="position:absolute;left:1657px;top:895px;width:11px;height:11px;border:1px solid;border-color:#696969 #e3e3e3 #e3e3e3 #696969;"></div><div style="position:absolute;left:1673px;top:895px;white-space:nowrap;font-size:11px;letter-spacing:-0.15px;line-height:13px;color:#a0a0a0;text-shadow:1px 1px 0 #fff;">Selected graphics position</div><div style="position:absolute;left:1834px;top:860px;width:72px;height:22px;background:#f0f0f0;"><div style="position:absolute;left:0;top:0;right:0;bottom:0;box-sizing:border-box;border:1px solid;border-color:#fff #696969 #696969 #fff;"></div><div style="position:absolute;left:1px;top:1px;right:1px;bottom:1px;box-sizing:border-box;border:1px solid;border-color:#e3e3e3 #a0a0a0 #a0a0a0 #e3e3e3;"></div><div style="position:absolute;left:0;right:0;top:0;bottom:0;display:flex;align-items:center;justify-content:center;padding-bottom:0px;color:#000;font-size:11px;letter-spacing:-0.15px;">Cut scale</div></div><div style="position:absolute;left:1834px;top:886px;width:72px;height:22px;background:#f0f0f0;"><div style="position:absolute;left:0;top:0;right:0;bottom:0;box-sizing:border-box;border:1px solid;border-color:#fff #696969 #696969 #fff;"></div><div style="position:absolute;left:1px;top:1px;right:1px;bottom:1px;box-sizing:border-box;border:1px solid;border-color:#e3e3e3 #a0a0a0 #a0a0a0 #e3e3e3;"></div><div style="position:absolute;left:0;right:0;top:0;bottom:0;display:flex;align-items:center;justify-content:center;padding-bottom:0px;color:#000;font-size:11px;letter-spacing:-0.15px;">Go scale</div></div><div style="position:absolute;left:1631px;top:925px;width:286px;height:40px;border:1px solid #fff;"></div><div style="position:absolute;left:1630px;top:924px;width:286px;height:40px;border:1px solid #a0a0a0;"></div><div class="grp" style="position:absolute;left:1636px;top:918px;white-space:nowrap;font-size:11px;letter-spacing:-0.15px;line-height:13px;background:#f0f0f0;padding:0 2px;">Device</div><div style="position:absolute;left:1639px;top:935px;width:92px;height:22px;background:#f0f0f0;"><div style="position:absolute;left:0;top:0;right:0;bottom:0;box-sizing:border-box;border:1px solid;border-color:#fff #696969 #696969 #fff;"></div><div style="position:absolute;left:1px;top:1px;right:1px;bottom:1px;box-sizing:border-box;border:1px solid;border-color:#e3e3e3 #a0a0a0 #a0a0a0 #e3e3e3;"></div><div style="position:absolute;left:0;right:0;top:0;bottom:0;display:flex;align-items:center;justify-content:center;padding-bottom:0px;color:#000;font-size:11px;letter-spacing:-0.15px;">Setting</div></div><div style="position:absolute;left:1735px;top:938px;width:171px;height:20px;background:#fff;box-sizing:border-box;border:1px solid;border-color:#a0a0a0 #fff #fff #a0a0a0;"><div style="position:absolute;left:0;top:0;right:0;bottom:0;border:1px solid;border-color:#696969 #e3e3e3 #e3e3e3 #696969;box-sizing:border-box;"></div><div style="position:absolute;left:3px;top:0;bottom:1px;display:flex;align-items:center;font-size:11px;letter-spacing:-0.15px;">Device---(USB:Auto)</div></div><div style="position:absolute;left:1888px;top:940px;width:16px;height:16px;background:#f0f0f0;border:1px solid;border-color:#fff #696969 #696969 #fff;"></div><svg style="position:absolute;left:1888px;top:940px;" width="16" height="16" viewBox="0 0 16 16"><path d="M3.5 6 h9 l-4.5 4.5 z" fill="#000"/></svg><div style="position:absolute;left:1600px;top:946px;white-space:nowrap;font-size:18px;letter-spacing:0.872px;line-height:26px;color:rgba(100,100,100,0.5);">Activate Windows</div><div style="position:absolute;left:1600px;top:971px;white-space:nowrap;font-size:13.5px;letter-spacing:0.612px;line-height:20px;color:rgba(100,100,100,0.5);">Go to Settings to activate Windows.</div><div style="position:absolute;left:0px;top:986px;width:1920px;height:1px;background:#fff;"></div><svg style="position:absolute;left:2px;top:992px;" width="10" height="10" viewBox="0 0 10 10"><path d="M2 2 L7 7 M7 2 L2 7" stroke="#000" stroke-width="1.5"/></svg><div style="position:absolute;left:5px;top:1004px;width:1px;height:7px;background:#b0b0b0;"></div><div style="position:absolute;left:8px;top:1004px;width:1px;height:7px;background:#b0b0b0;"></div><div style="position:absolute;left:21px;top:990px;width:23px;height:25px;background:#000000;border:1px solid;border-color:#a0a0a0 #d8d8d8 #d8d8d8 #a0a0a0;"></div><div style="position:absolute;left:46px;top:990px;width:23px;height:25px;background:#0000ff;border:2px solid;border-color:#000 #f0f0f0 #f0f0f0 #000;"></div><div style="position:absolute;left:72px;top:990px;width:23px;height:25px;background:#ff0000;border:1px solid;border-color:#a0a0a0 #d8d8d8 #d8d8d8 #a0a0a0;"></div><div style="position:absolute;left:97px;top:990px;width:23px;height:25px;background:#00ff00;border:1px solid;border-color:#a0a0a0 #d8d8d8 #d8d8d8 #a0a0a0;"></div><div style="position:absolute;left:123px;top:990px;width:23px;height:25px;background:#fa8072;border:1px solid;border-color:#a0a0a0 #d8d8d8 #d8d8d8 #a0a0a0;"></div><div style="position:absolute;left:148px;top:990px;width:23px;height:25px;background:#ffff00;border:1px solid #1e90ff;"></div><div style="position:absolute;left:174px;top:990px;width:23px;height:25px;background:#1e90ff;border:1px solid;border-color:#a0a0a0 #d8d8d8 #d8d8d8 #a0a0a0;"></div><div style="position:absolute;left:199px;top:990px;width:23px;height:25px;background:#8b3a0e;border:1px solid;border-color:#a0a0a0 #d8d8d8 #d8d8d8 #a0a0a0;"></div><div style="position:absolute;left:224px;top:990px;width:23px;height:25px;background:#808000;border:1px solid;border-color:#a0a0a0 #d8d8d8 #d8d8d8 #a0a0a0;"></div><div style="position:absolute;left:250px;top:990px;width:23px;height:25px;background:#008060;border:1px solid;border-color:#a0a0a0 #d8d8d8 #d8d8d8 #a0a0a0;"></div><div style="position:absolute;left:275px;top:990px;width:23px;height:25px;background:#ff4500;border:1px solid;border-color:#a0a0a0 #d8d8d8 #d8d8d8 #a0a0a0;"></div><div style="position:absolute;left:301px;top:990px;width:23px;height:25px;background:#4b0082;border:1px solid;border-color:#a0a0a0 #d8d8d8 #d8d8d8 #a0a0a0;"></div><div style="position:absolute;left:326px;top:990px;width:23px;height:25px;background:#ffd0dc;border:1px solid;border-color:#a0a0a0 #d8d8d8 #d8d8d8 #a0a0a0;"></div><div style="position:absolute;left:352px;top:990px;width:23px;height:25px;background:#b4a0f8;border:1px solid;border-color:#a0a0a0 #d8d8d8 #d8d8d8 #a0a0a0;"></div><div style="position:absolute;left:377px;top:990px;width:23px;height:25px;background:#d0f8a0;border:1px solid;border-color:#a0a0a0 #d8d8d8 #d8d8d8 #a0a0a0;"></div><div style="position:absolute;left:403px;top:990px;width:23px;height:25px;background:#f89050;border:1px solid;border-color:#a0a0a0 #d8d8d8 #d8d8d8 #a0a0a0;"></div><div style="position:absolute;left:428px;top:990px;width:23px;height:25px;background:#dc7098;border:1px solid;border-color:#a0a0a0 #d8d8d8 #d8d8d8 #a0a0a0;"></div><div style="position:absolute;left:453px;top:990px;width:23px;height:25px;background:#9070dc;border:1px solid;border-color:#a0a0a0 #d8d8d8 #d8d8d8 #a0a0a0;"></div><div style="position:absolute;left:479px;top:990px;width:23px;height:25px;background:#78dc78;border:1px solid;border-color:#a0a0a0 #d8d8d8 #d8d8d8 #a0a0a0;"></div><div style="position:absolute;left:504px;top:990px;width:23px;height:25px;background:#b8a070;border:1px solid;border-color:#a0a0a0 #d8d8d8 #d8d8d8 #a0a0a0;"></div><div style="position:absolute;left:0px;top:1018px;width:1920px;height:1px;background:#c0c0c0;"></div><div style="position:absolute;left:0px;top:1019px;width:1920px;height:1px;background:#fff;"></div><div style="position:absolute;left:0px;top:1022px;width:1462px;height:17px;border:1px solid;border-color:#a0a0a0 #fff #fff #a0a0a0;"></div><div class="stat" style="position:absolute;left:2px;top:1024px;white-space:nowrap;font-size:12px;letter-spacing:-0.063px;line-height:14px;">--- *Welcome to use the Laser system of cutting,Propose the display area 1024*768 or higher *---</div><div style="position:absolute;left:1465px;top:1022px;width:20px;height:17px;border:1px solid;border-color:#a0a0a0 #fff #fff #a0a0a0;"></div><div style="position:absolute;left:1488px;top:1022px;width:187px;height:17px;border:1px solid;border-color:#a0a0a0 #fff #fff #a0a0a0;"></div><div class="stat" style="position:absolute;left:1493px;top:1024px;white-space:nowrap;font-size:12px;letter-spacing:-0.035px;line-height:14px;">General mode,Total count:0</div><div style="position:absolute;left:1678px;top:1022px;width:5px;height:17px;border:1px solid;border-color:#a0a0a0 #fff #fff #a0a0a0;"></div><div style="position:absolute;left:1685px;top:1022px;width:235px;height:17px;border:1px solid;border-color:#a0a0a0 #fff #fff #a0a0a0;"></div><div class="stat" style="position:absolute;left:1687px;top:1024px;white-space:nowrap;font-size:12px;letter-spacing:-0.429px;line-height:14px;">644XS,X:630.097mm,Y:249.433mm</div><div style="position:absolute;left:0px;top:1040px;width:1920px;height:40px;background:#211f1e;"></div><svg style="position:absolute;left:16px;top:1052px;" width="16" height="16" viewBox="0 0 16 16"><path d="M0 2.3 L6.6 1.4 V7.6 H0 Z M7.4 1.3 L16 0 V7.6 H7.4 Z M0 8.4 H6.6 V14.6 L0 13.7 Z M7.4 8.4 H16 V16 L7.4 14.7 Z" fill="#fff"/></svg><div style="position:absolute;left:48px;top:1040px;width:288px;height:40px;background:#f3f3f3;"></div><svg style="position:absolute;left:58px;top:1050px;" width="22" height="22" viewBox="0 0 22 22"><circle cx="13" cy="8.5" r="5.2" fill="none" stroke="#222" stroke-width="1.4"/><path d="M9.3 12.3 L3 18.5" stroke="#222" stroke-width="1.5"/></svg><div class="srch" style="position:absolute;left:88px;top:1050px;white-space:nowrap;font-size:15px;letter-spacing:-0.240px;line-height:20px;color:#3c3c3c;">Type here to search</div><svg style="position:absolute;left:270px;top:1040px;" width="60" height="40" viewBox="0 0 60 40"><ellipse cx="39" cy="24.5" rx="5.5" ry="6.5" fill="#68b45c" transform="rotate(-15 39 24.5)"/><ellipse cx="50" cy="23" rx="5.3" ry="6" fill="#74bc64" transform="rotate(20 50 23)"/><ellipse cx="43" cy="35" rx="9" ry="8.5" fill="#5cac54"/><ellipse cx="14.5" cy="36" rx="5.5" ry="7" fill="#54a44c" transform="rotate(-20 14.5 36)"/><ellipse cx="23.5" cy="37.5" rx="6" ry="8" fill="#4c9c48"/><ellipse cx="31" cy="39" rx="5" ry="7" fill="#60b058" transform="rotate(25 31 39)"/><circle cx="36" cy="19" r="0.7" fill="#e0a040"/><circle cx="41" cy="18" r="0.7" fill="#e0a040"/><circle cx="47" cy="17.5" r="0.7" fill="#e0a040"/><circle cx="53" cy="20" r="0.7" fill="#e0a040"/><circle cx="54" cy="26" r="0.7" fill="#e0a040"/><circle cx="45" cy="28" r="0.7" fill="#e0a040"/><circle cx="13" cy="31" r="0.7" fill="#e0a040"/><circle cx="20" cy="30" r="0.7" fill="#e0a040"/><circle cx="27" cy="32" r="0.7" fill="#e0a040"/><circle cx="38" cy="30" r="0.7" fill="#e0a040"/><circle cx="49" cy="33" r="0.7" fill="#e0a040"/><path d="M21.0 3.3 L16.0 7.0 Q13.3 9.5 14.0 14.0 Q14.0 21.0 19.5 27.0 Q26.0 32.5 35.0 31.5 L47.0 36.5 L49.3 33.2 Q40.0 26.0 33.0 20.0 Q27.0 12.0 23.0 7.5 Z" fill="#c6baa4"/><path d="M25.0 15.0 Q33.0 22.0 48.0 34.0 L47.0 36.0 Q32.0 28.0 23.0 20.0 Z" fill="#ada08c"/><path d="M21.2 3.0 L17.5 7.2 L20.7 7.6 Z" fill="#d44434"/><path d="M14.3 11.3 L10.8 13.6 L14.8 15.3 Z" fill="#f09428"/><path d="M14.6 10.5 Q16.5 13.5 15.3 16.5" stroke="#d44c40" stroke-width="1.3" fill="none"/><path d="M18.0 19.0 Q25.0 26.0 36.0 29.5" stroke="#cc5c50" stroke-width="1.4" fill="none"/><circle cx="17.6" cy="10.3" r="0.8" fill="#201810"/></svg><svg style="position:absolute;left:351px;top:1051.5px;" width="18" height="17" viewBox="0 0 18 17"><rect x="1.2" y="4.7" width="9.6" height="7.2" fill="none" stroke="#fff" stroke-width="1.4"/><path d="M0.7 3 V0.7 H11.3 V3 M0.7 13.6 V15.9 H11.3 V13.6" stroke="#fff" stroke-width="1.4" fill="none"/><rect x="14.3" y="0" width="1.6" height="3.2" fill="#fff"/><rect x="13.6" y="4.6" width="3" height="3" fill="#fff"/><rect x="14.3" y="9" width="1.6" height="7.6" fill="#fff"/></svg><svg style="position:absolute;left:398.6px;top:1047.3px;" width="26.5" height="27.6" viewBox="0 0 25 26"><circle cx="12" cy="12" r="11.5" fill="#fff"/><path d="M12 12 L2 6.2 A11.5 11.5 0 0 1 22 6.2 Z" fill="#e33b2e"/><path d="M12 12 L22 6.2 A11.5 11.5 0 0 1 12 23.5 Z" fill="#fbc116"/><path d="M12 12 L12 23.5 A11.5 11.5 0 0 1 2 6.2 Z" fill="#2ba24c"/><circle cx="12" cy="12" r="5.3" fill="#fff"/><circle cx="12" cy="12" r="4.2" fill="#4285f4"/><circle cx="18" cy="18.5" r="6.8" fill="#c8ccd0"/><path d="M11.5 17 Q13 12 18.5 11.8 Q23.5 12.5 24.6 17 Q20 14.5 11.5 17 Z" fill="#f0f0f4"/><path d="M14 18.5 Q18 16 23 18 L22.5 22 Q18.5 24 14.5 22 Z" fill="#c89878"/><rect x="17" y="17.3" width="6" height="2" rx="0.8" fill="#181c28"/><path d="M12.5 22.5 Q17 21 21 24.5 Q18 25.8 15.5 24.8 Q13.5 24 12.5 22.5 Z" fill="#38a8a0"/></svg><svg style="position:absolute;left:448.5px;top:1050.5px;" width="22.5" height="19" viewBox="0 0 24 21"><path d="M1 3 Q1 1.5 2.5 1.5 H8 L10 4 H21 Q22.5 4 22.5 5.5 V18 H1 Z" fill="#f0b020"/><path d="M1 7 H22.5 V19 Q22.5 20 21.5 20 H2 Q1 20 1 19 Z" fill="#ffd860"/><path d="M6.5 20 V13 H17 V20 H14 V16 H9.5 V20 Z" fill="#3898e8"/></svg><svg style="position:absolute;left:496px;top:1048px;" width="24" height="23" viewBox="0 0 24 23"><path d="M6 8 L14 1.5 L22 8 V19 Q22 21 20 21 H8 Q6 21 6 19 Z" fill="#1c78d4"/><path d="M8 7 L14 2.5 L20.5 7 L14 11 Z" fill="#50b8f0"/><path d="M6 9 L22 19.5 V19 Q22 21 20 21 H8 Q6 21 6 19 Z" fill="#3c9cec"/><path d="M22 9 L8 21 H20 Q22 21 22 19 Z" fill="#58c0f8"/><rect x="1" y="10" width="10" height="10" rx="2" fill="#0c5cb0"/><circle cx="6" cy="15" r="2.6" fill="none" stroke="#fff" stroke-width="1.5"/></svg><div style="position:absolute;left:547px;top:1050px;width:21px;height:20px;background:#340000;border-radius:4px;"></div><div style="position:absolute;left:550px;top:1053px;white-space:nowrap;font-size:12px;line-height:14px;font-weight:bold;color:#ff9a1e;">Ai</div><div style="position:absolute;left:596px;top:1050px;width:21px;height:20px;background:#340000;border-radius:4px;"></div><div style="position:absolute;left:599px;top:1053px;white-space:nowrap;font-size:12px;line-height:14px;font-weight:bold;color:#ff9a1e;">Ai</div><div style="position:absolute;left:632px;top:1040px;width:48px;height:40px;background:#4b4847;"></div><svg style="position:absolute;left:644px;top:1048px;" width="24" height="24" viewBox="0 0 24 24"><path d="M12 0 L13.7 6.7 L24 8.3 L13.7 9.9 L12 15 L10.3 9.9 L0 8.3 L10.3 6.7 Z" fill="#f01010"/><path d="M1.8 11.6 L10.6 10.6 L8.8 14.5 L7.3 21.8 Z M22.2 11.6 L13.4 10.6 L15.2 14.5 L16.7 21.8 Z" fill="#f01010"/><path d="M10.6 13.5 H13.4 L12 22.6 Z" fill="#f01010"/></svg><svg style="position:absolute;left:694px;top:1048px;" width="22" height="24" viewBox="0 0 22 24"><path d="M11 0.5 L21 6 V18 L11 23.5 L1 18 V6 Z" fill="#6cb048"/><path d="M11 0.5 L21 6 L11 12 Z" fill="#88c860"/><path d="M11 12 L21 6 V18 L11 23.5 Z" fill="#58983c"/><path d="M11 0.5 L4 22 L1 18 V6 Z" fill="#7cc058" opacity="0.7"/></svg><svg style="position:absolute;left:741px;top:1048px;" width="24" height="24" viewBox="0 0 24 24"><defs><linearGradient id="edg1" x1="0" y1="0" x2="1" y2="1"><stop offset="0" stop-color="#38c8a0"/><stop offset="0.5" stop-color="#28a8d8"/><stop offset="1" stop-color="#0c58b8"/></linearGradient></defs><circle cx="12" cy="12" r="11.5" fill="url(#edg1)"/><path d="M0.8 10.5 Q3 1.5 12.5 0.6 Q22 1 23.5 10 Q23 14.5 18 14.5 Q14 14 14.5 11 Q14.5 8 11 7.5 Q4 7.5 0.8 10.5 Z" fill="#58d890" opacity="0.85"/><path d="M8 9 Q4.5 12 6.5 17 Q9 22.5 16 22.8 Q10 20 10.5 14 Q11 10 14.5 10.2 Q12 7.5 8 9 Z" fill="#0c4ca0"/><path d="M14.5 11 Q13.5 15 18 15.5 Q22 15.5 23.4 12 Q23.5 9 22.5 8 Q23.5 14 18 14.3 Q15 14 14.5 11 Z" fill="#2078d0"/><ellipse cx="12.3" cy="14.5" rx="2.2" ry="3.4" fill="#211f1e"/></svg><svg style="position:absolute;left:794px;top:1049px;" width="17" height="22" viewBox="0 0 17 22"><rect x="0.5" y="0.5" width="16" height="21" rx="1" fill="#8890a0" stroke="#a8b0c0" stroke-width="1"/><rect x="2.5" y="2.5" width="12" height="4" fill="#60c8e8"/><rect x="2.5" y="8.2" width="3.4" height="3.4" fill="#e8e8e8"/><rect x="2.5" y="12.5" width="3.4" height="3.4" fill="#e8e8e8"/><rect x="2.5" y="16.8" width="3.4" height="3.4" fill="#e8e8e8"/><rect x="6.8" y="8.2" width="3.4" height="3.4" fill="#e8e8e8"/><rect x="6.8" y="12.5" width="3.4" height="3.4" fill="#e8e8e8"/><rect x="6.8" y="16.8" width="3.4" height="3.4" fill="#e8e8e8"/><rect x="11.1" y="8.2" width="3.4" height="3.4" fill="#e8e8e8"/><rect x="11.1" y="12.5" width="3.4" height="3.4" fill="#1858a0"/><rect x="11.1" y="16.8" width="3.4" height="3.4" fill="#1858a0"/><rect x="11.1" y="12.5" width="3.4" height="7.7" fill="#1858a0"/></svg><div style="position:absolute;left:391px;top:1078px;width:40px;height:2px;background:#76b9ed;"></div><div style="position:absolute;left:632px;top:1078px;width:48px;height:2px;background:#76b9ed;"></div><div style="position:absolute;left:685px;top:1078px;width:40px;height:2px;background:#76b9ed;"></div><div style="position:absolute;left:734px;top:1078px;width:39px;height:2px;background:#76b9ed;"></div><div style="position:absolute;left:783px;top:1078px;width:32px;height:2px;background:#76b9ed;"></div><div style="position:absolute;left:816px;top:1078px;width:7px;height:2px;background:#5c8fb8;"></div><svg style="position:absolute;left:1584px;top:1048px;" width="19" height="24" viewBox="0 0 19 24"><defs><linearGradient id="flm" x1="0" y1="0" x2="0" y2="1"><stop offset="0" stop-color="#ffb020"/><stop offset="0.6" stop-color="#ff7040"/><stop offset="1" stop-color="#f04880"/></linearGradient></defs><path d="M10 0 Q15 4 14 9 Q17.5 10 16 14.5 H3 Q0 10 4 7 Q5 10 7 8 Q5 3 10 0 Z" fill="url(#flm)"/><path d="M1 14.5 H18 Q17 19 12 19.5 L11 23.5 H8 L7 19.5 Q2 19 1 14.5 Z" fill="#3898f0"/></svg><div class="tdy" style="position:absolute;left:1613px;top:1050px;white-space:nowrap;font-size:15px;letter-spacing:-0.595px;line-height:20px;color:#fff;">Today's updates</div><svg style="position:absolute;left:1736px;top:1055px;" width="14" height="10" viewBox="0 0 14 10"><path d="M1.5 8.5 L7 2.5 L12.5 8.5" stroke="#fff" stroke-width="1.4" fill="none"/></svg><svg style="position:absolute;left:1758px;top:1051px;" width="18" height="18" viewBox="0 0 18 18"><path d="M1.5 6.5 H4 L8 2.5 V15 L4 11.5 H1.5 Z" stroke="#fff" stroke-width="1.1" fill="none"/><path d="M10.5 6.5 Q12.2 9 10.5 11.5" stroke="#fff" stroke-width="1" fill="none"/><path d="M12.8 4.8 Q15.5 9 12.8 13.2" stroke="#a0a0a0" stroke-width="1" fill="none"/><path d="M15 3 Q18.5 9 15 15" stroke="#707070" stroke-width="1" fill="none"/></svg><svg style="position:absolute;left:1785px;top:1053px;" width="15" height="15" viewBox="0 0 15 15"><path d="M1 13 A12 12 0 0 1 13 1" stroke="#909090" stroke-width="1.2" fill="none"/><path d="M4.5 13 A8.5 8.5 0 0 1 13 4.5" stroke="#fff" stroke-width="1.2" fill="none"/><path d="M8 13 A5 5 0 0 1 13 8" stroke="#fff" stroke-width="1.2" fill="none"/><circle cx="12" cy="12" r="1.5" fill="#fff"/></svg><div class="clk" style="position:absolute;left:1795px;top:1044px;width:80px;text-align:center;font-size:12px;line-height:15px;color:#fff;">4:17 PM</div><div class="clk" style="position:absolute;left:1795px;top:1062px;width:80px;text-align:center;font-size:12px;line-height:15px;color:#fff;">2/13/2026</div><svg style="position:absolute;left:1879px;top:1052px;" width="24" height="24" viewBox="0 0 24 24"><path d="M0.5 0.5 H15.5 V11.5 H6 L3 14.5 V11.5 H0.5 Z" fill="#fff"/><path d="M3 3.5 H13 M3 6 H13 M3 8.5 H13" stroke="#211f1e" stroke-width="1"/><circle cx="16" cy="15.5" r="7" fill="#211f1e" stroke="#909090" stroke-width="1"/><text x="16" y="19.5" font-family="Liberation Sans" font-size="11" fill="#fff" text-anchor="middle">1</text></svg><div style="position:absolute;left:1915px;top:1040px;width:1px;height:40px;background:#5a5856;"></div>
</body></html>
